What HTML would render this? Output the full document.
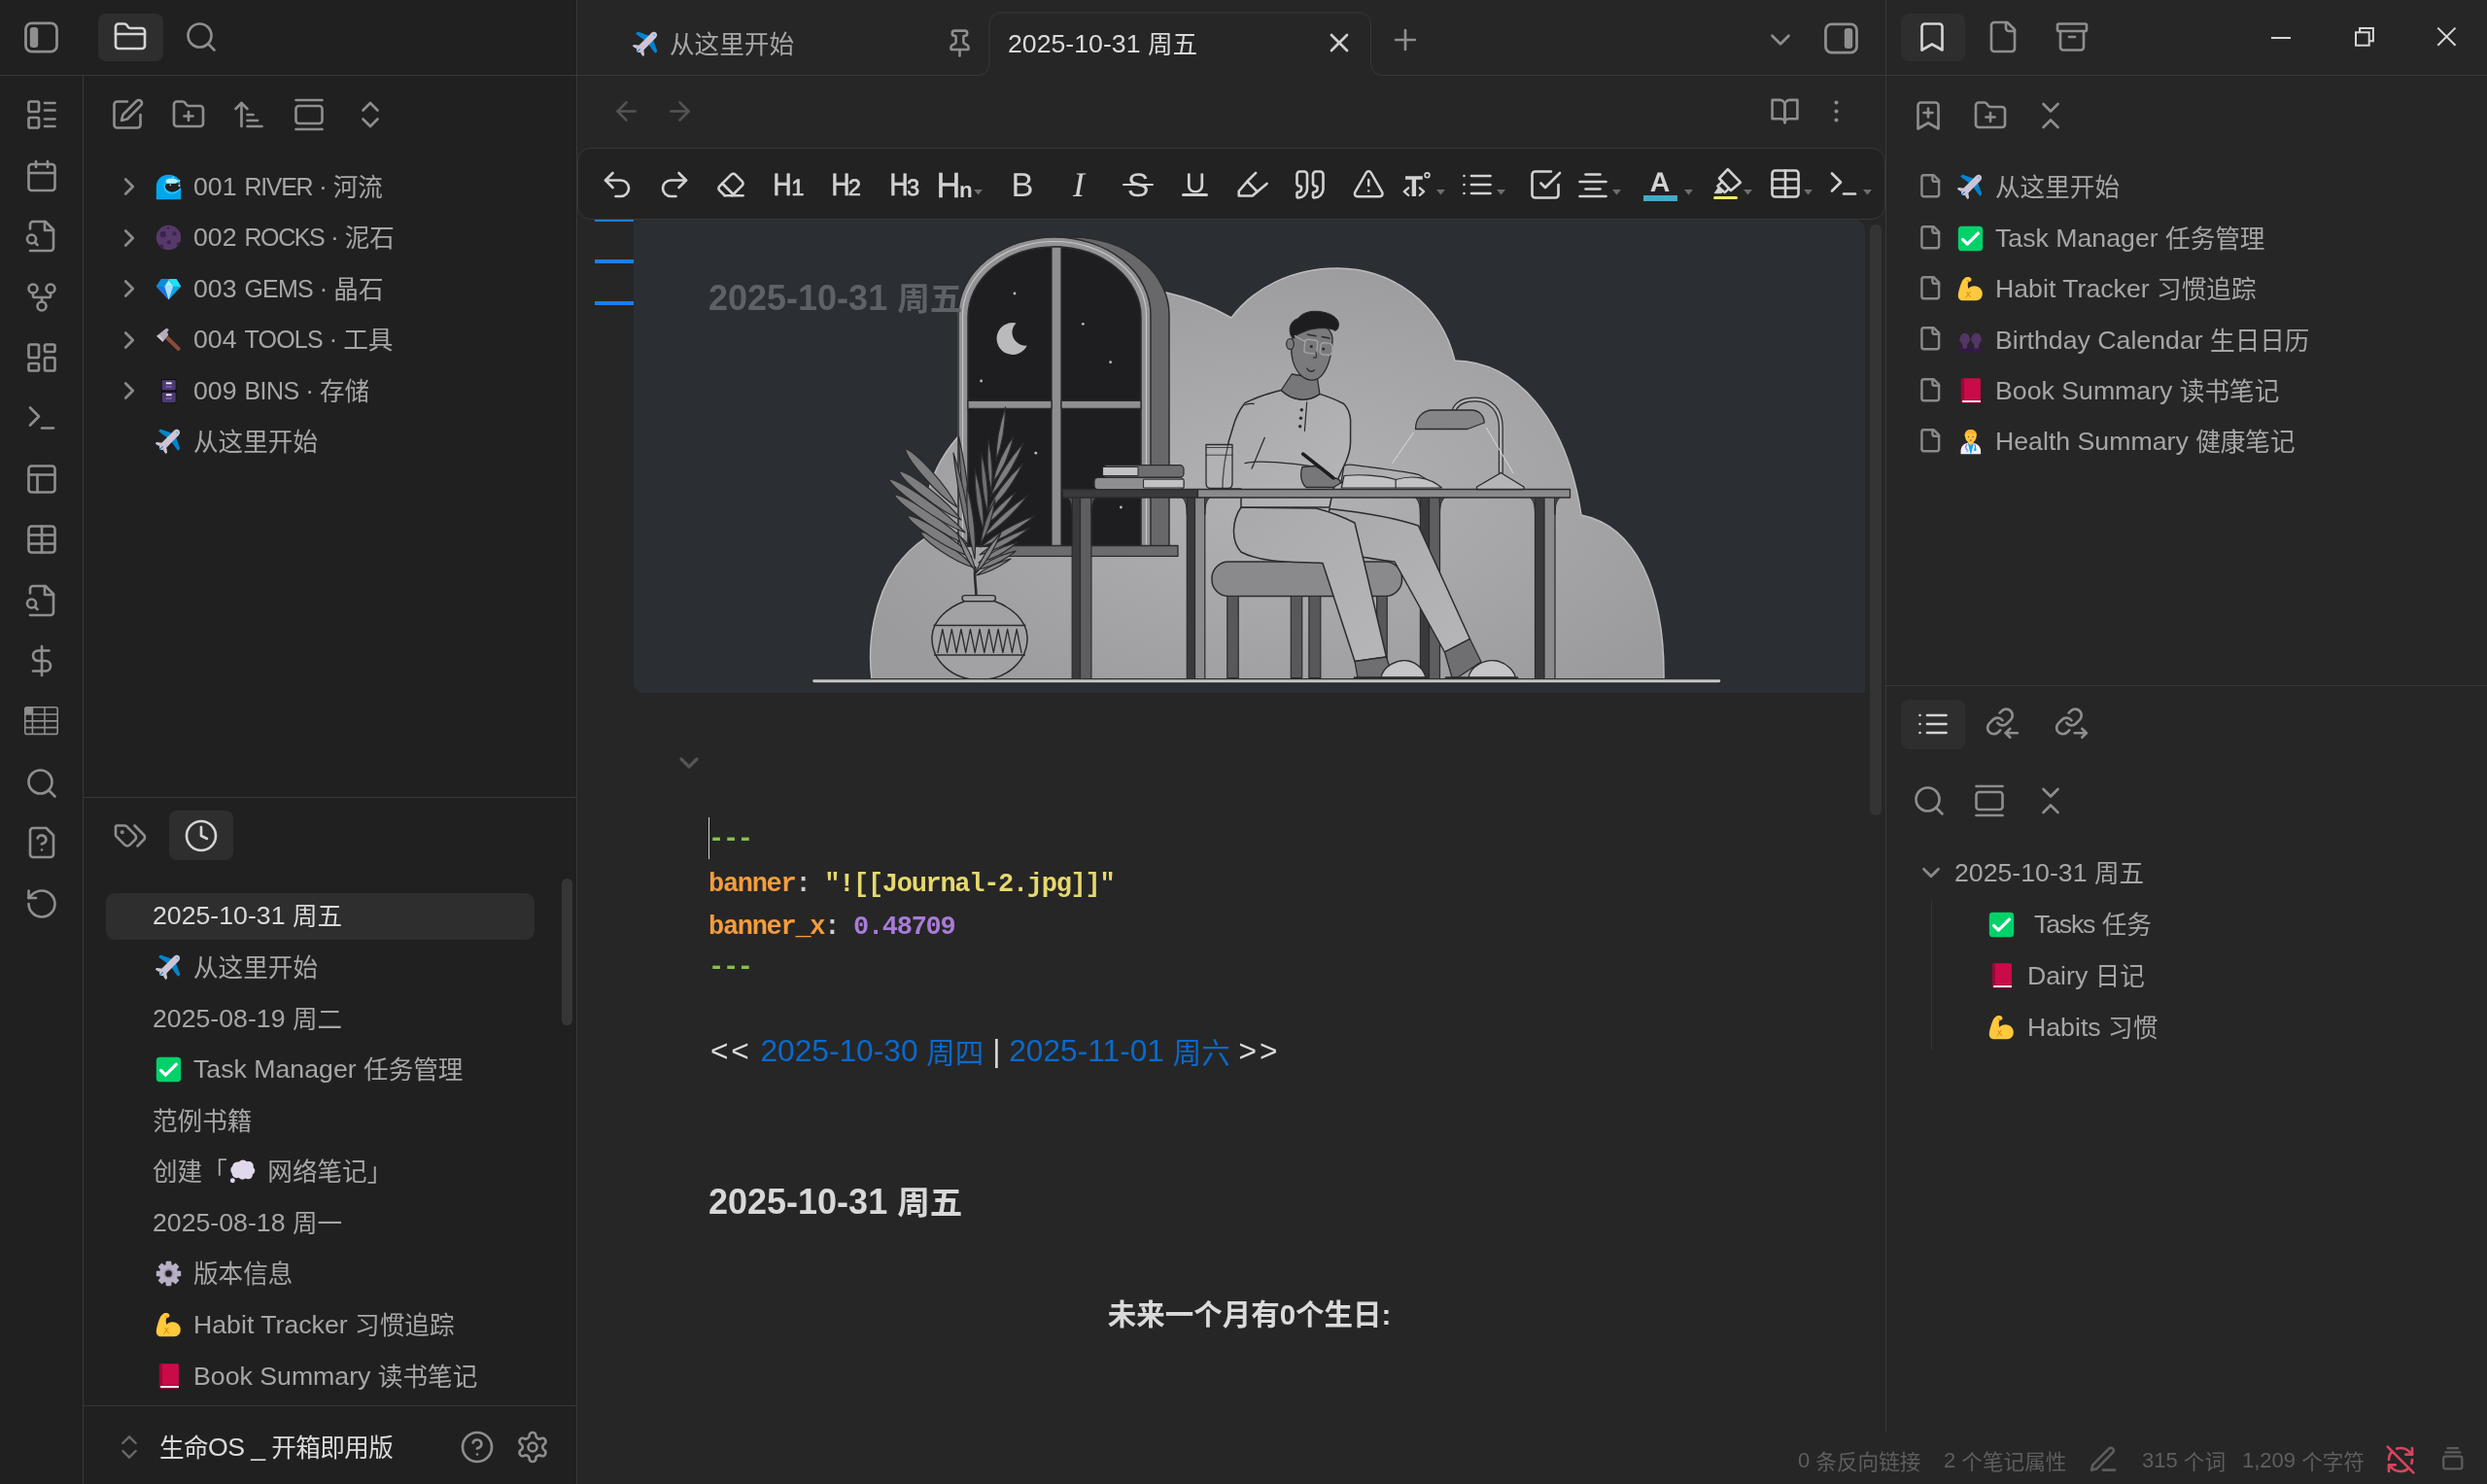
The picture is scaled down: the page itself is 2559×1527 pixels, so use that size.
<!DOCTYPE html><html lang="zh"><head><meta charset="utf-8"><title>2025-10-31 周五 - 生命OS _ 开箱即用版 - Obsidian</title><style>
*{box-sizing:border-box;margin:0;padding:0}
html,body{width:2559px;height:1527px;overflow:hidden;background:#262626}
body{position:relative;font-family:"Liberation Sans","Noto Sans CJK SC",sans-serif;color:#a6a6a6;font-size:26px}
.b,.ic,.t,.tt,.st,.ed,.mono,.h1{position:absolute;display:block}
.t,.tt,.st,.ed,.mono,.h1{white-space:pre;will-change:transform}
svg text{text-rendering:geometricPrecision}
.ic{will-change:transform}
.c{position:relative}
.t{font-size:26.7px;color:#a6a6a6}
.tt{font-size:26.7px;color:#dadada}
.t .c,.tt .c{font-size:25.6px;top:.7px}
.st .c{font-size:21.6px;top:1.5px}
.ed .c{font-size:29.5px;top:2px}
.h1 .c{font-size:33.5px;top:.4px}
.st{font-size:22px;color:#5e5e5e}
.ed{font-size:31.7px;color:#dadada}
.mono{font-family:"Liberation Mono","Noto Sans CJK SC",monospace;font-weight:bold;font-size:27px;letter-spacing:-1.3px}
.h1{font-size:36px;font-weight:bold;color:#d8d8d8}
a{color:#0b69cb;text-decoration:none}
</style></head><body>
<div class="b" style="left:0px;top:0px;width:594px;height:1527px;background:#202020"></div>
<div class="b" style="left:0px;top:77px;width:594px;height:1px;background:#383838"></div>
<div class="b" style="left:85px;top:78px;width:1px;height:1449px;background:#383838"></div>
<div class="b" style="left:593px;top:0px;width:1px;height:1527px;background:#383838"></div>
<div class="b" style="left:86px;top:820px;width:507px;height:1px;background:#383838"></div>
<div class="b" style="left:86px;top:1446px;width:507px;height:1px;background:#383838"></div>
<div class="b" style="left:1940px;top:0px;width:1px;height:1474px;background:#383838"></div>
<div class="b" style="left:1941px;top:77px;width:618px;height:1px;background:#383838"></div>
<div class="b" style="left:1941px;top:705px;width:618px;height:1px;background:#383838"></div>
<svg class="ic" style="left:22px;top:20px;width:41px;height:37px;color:#8e8e8e" viewBox="0 0 41 37" fill="none" stroke="currentColor" stroke-width="2.8"><rect x="4.5" y="3.9" width="32" height="29.200" rx="6"/><rect x="8.800" y="8" width="8.400" height="21" rx="3.200" fill="currentColor" stroke="none"/></svg>
<div class="b" style="left:101px;top:14px;width:67px;height:49px;background:#2e2e2e;border-radius:8px"></div>
<svg class="ic" style="left:116.3px;top:20.2px;width:36px;height:36px;color:#d4d4d4" viewBox="0 0 24 24" fill="none" stroke="currentColor" stroke-width="1.75" stroke-linecap="round" stroke-linejoin="round"><path d="M20 20a2 2 0 0 0 2-2V8a2 2 0 0 0-2-2h-7.900a2 2 0 0 1-1.690-.9L9.600 3.900A2 2 0 0 0 7.930 3H4a2 2 0 0 0-2 2v13a2 2 0 0 0 2 2Z"/><path d="M2 10h20"/></svg>
<svg class="ic" style="left:188.5px;top:20.4px;width:36px;height:36px;color:#8e8e8e" viewBox="0 0 24 24" fill="none" stroke="currentColor" stroke-width="1.75" stroke-linecap="round" stroke-linejoin="round"><circle cx="11" cy="11" r="8"/><path d="m21 21-4.3-4.3"/></svg>
<svg class="ic" style="left:24.5px;top:100.4px;width:36px;height:36px;color:#8e8e8e" viewBox="0 0 24 24" fill="none" stroke="currentColor" stroke-width="1.75" stroke-linecap="round" stroke-linejoin="round"><rect width="7" height="7" x="3" y="3" rx="1"/><rect width="7" height="7" x="3" y="14" rx="1"/><path d="M14 4h7"/><path d="M14 9h7"/><path d="M14 15h7"/><path d="M14 20h7"/></svg>
<svg class="ic" style="left:24.5px;top:162.8px;width:36px;height:36px;color:#8e8e8e" viewBox="0 0 24 24" fill="none" stroke="currentColor" stroke-width="1.75" stroke-linecap="round" stroke-linejoin="round"><path d="M8 2v4"/><path d="M16 2v4"/><rect width="18" height="18" x="3" y="4" rx="2"/><path d="M3 10h18"/></svg>
<svg class="ic" style="left:24.5px;top:225.2px;width:36px;height:36px;color:#8e8e8e" viewBox="0 0 24 24" fill="none" stroke="currentColor" stroke-width="1.75" stroke-linecap="round" stroke-linejoin="round"><path d="M4 22h14a2 2 0 0 0 2-2V7.5L14.5 2H6a2 2 0 0 0-2 2v3"/><polyline points="14 2 14 8 20 8"/><path d="M5 17a3 3 0 1 0 0-6 3 3 0 0 0 0 6z"/><path d="m9 18-1.5-1.5"/></svg>
<svg class="ic" style="left:24.5px;top:287.6px;width:36px;height:36px;color:#8e8e8e" viewBox="0 0 24 24" fill="none" stroke="currentColor" stroke-width="1.75" stroke-linecap="round" stroke-linejoin="round"><circle cx="12" cy="18" r="3"/><circle cx="6" cy="6" r="3"/><circle cx="18" cy="6" r="3"/><path d="M18 9v2c0 .6-.4 1-1 1H7c-.6 0-1-.4-1-1V9"/><path d="M12 12v3"/></svg>
<svg class="ic" style="left:24.5px;top:350.0px;width:36px;height:36px;color:#8e8e8e" viewBox="0 0 24 24" fill="none" stroke="currentColor" stroke-width="1.75" stroke-linecap="round" stroke-linejoin="round"><rect width="7" height="9" x="3" y="3" rx="1"/><rect width="7" height="5" x="14" y="3" rx="1"/><rect width="7" height="9" x="14" y="12" rx="1"/><rect width="7" height="5" x="3" y="16" rx="1"/></svg>
<svg class="ic" style="left:24.5px;top:412.4px;width:36px;height:36px;color:#8e8e8e" viewBox="0 0 24 24" fill="none" stroke="currentColor" stroke-width="1.75" stroke-linecap="round" stroke-linejoin="round"><polyline points="4 17 10 11 4 5"/><line x1="12" x2="20" y1="19" y2="19"/></svg>
<svg class="ic" style="left:24.5px;top:474.8px;width:36px;height:36px;color:#8e8e8e" viewBox="0 0 24 24" fill="none" stroke="currentColor" stroke-width="1.75" stroke-linecap="round" stroke-linejoin="round"><rect width="18" height="18" x="3" y="3" rx="2"/><path d="M3 9h18"/><path d="M9 21V9"/></svg>
<svg class="ic" style="left:24.5px;top:537.2px;width:36px;height:36px;color:#8e8e8e" viewBox="0 0 24 24" fill="none" stroke="currentColor" stroke-width="1.75" stroke-linecap="round" stroke-linejoin="round"><path d="M12 3v18"/><rect width="18" height="18" x="3" y="3" rx="2"/><path d="M3 9h18"/><path d="M3 15h18"/></svg>
<svg class="ic" style="left:24.5px;top:599.6px;width:36px;height:36px;color:#8e8e8e" viewBox="0 0 24 24" fill="none" stroke="currentColor" stroke-width="1.75" stroke-linecap="round" stroke-linejoin="round"><path d="M4 22h14a2 2 0 0 0 2-2V7.5L14.5 2H6a2 2 0 0 0-2 2v3"/><polyline points="14 2 14 8 20 8"/><path d="M5 17a3 3 0 1 0 0-6 3 3 0 0 0 0 6z"/><path d="m9 18-1.5-1.5"/></svg>
<svg class="ic" style="left:24.5px;top:662.0px;width:36px;height:36px;color:#8e8e8e" viewBox="0 0 24 24" fill="none" stroke="currentColor" stroke-width="1.75" stroke-linecap="round" stroke-linejoin="round"><line x1="12" x2="12" y1="2" y2="22"/><path d="M17 5H9.5a3.5 3.5 0 0 0 0 7h5a3.5 3.5 0 0 1 0 7H6"/></svg>
<svg class="ic" style="left:24px;top:726.4px;width:37px;height:32px;color:#8e8e8e" viewBox="0 0 37 32" fill="none" stroke="currentColor" stroke-width="1.600"><rect x="1.800" y="1.800" width="33.400" height="27.600" rx="2"/><path d="M1.800 9h33.400M1.800 15.900h33.400M1.800 22.600h33.400M9.400 1.800v27.600M22 1.800v27.600"/><rect x="1.800" y="1.800" width="7.600" height="7.200" fill="currentColor" stroke="none"/></svg>
<svg class="ic" style="left:24.5px;top:787.8px;width:36px;height:36px;color:#8e8e8e" viewBox="0 0 24 24" fill="none" stroke="currentColor" stroke-width="1.75" stroke-linecap="round" stroke-linejoin="round"><circle cx="11" cy="11" r="8"/><path d="m21 21-4.3-4.3"/></svg>
<svg class="ic" style="left:24.5px;top:849.2px;width:36px;height:36px;color:#8e8e8e" viewBox="0 0 24 24" fill="none" stroke="currentColor" stroke-width="1.75" stroke-linecap="round" stroke-linejoin="round"><path d="M12 17h.01"/><path d="M15 2H6a2 2 0 0 0-2 2v16a2 2 0 0 0 2 2h12a2 2 0 0 0 2-2V7z"/><path d="M9.1 9a3 3 0 0 1 5.82 1c0 2-3 3-3 3"/></svg>
<svg class="ic" style="left:24.5px;top:911.6px;width:36px;height:36px;color:#8e8e8e" viewBox="0 0 24 24" fill="none" stroke="currentColor" stroke-width="1.75" stroke-linecap="round" stroke-linejoin="round"><path d="M3 12a9 9 0 1 0 9-9 9.75 9.75 0 0 0-6.74 2.74L3 8"/><path d="M3 3v5h5"/></svg>
<svg class="ic" style="left:113.2px;top:100.0px;width:36px;height:36px;color:#8e8e8e" viewBox="0 0 24 24" fill="none" stroke="currentColor" stroke-width="1.75" stroke-linecap="round" stroke-linejoin="round"><path d="M12 3H5a2 2 0 0 0-2 2v14a2 2 0 0 0 2 2h14a2 2 0 0 0 2-2v-7"/><path d="M18.375 2.625a2.121 2.121 0 1 1 3 3L12 15l-4 1 1-4Z"/></svg>
<svg class="ic" style="left:175.5px;top:100.0px;width:36px;height:36px;color:#8e8e8e" viewBox="0 0 24 24" fill="none" stroke="currentColor" stroke-width="1.75" stroke-linecap="round" stroke-linejoin="round"><path d="M12 10v6"/><path d="M9 13h6"/><path d="M20 20a2 2 0 0 0 2-2V8a2 2 0 0 0-2-2h-7.9a2 2 0 0 1-1.69-.9L9.6 3.9A2 2 0 0 0 7.93 3H4a2 2 0 0 0-2 2v13a2 2 0 0 0 2 2Z"/></svg>
<svg class="ic" style="left:237.9px;top:100.0px;width:36px;height:36px;color:#8e8e8e" viewBox="0 0 24 24" fill="none" stroke="currentColor" stroke-width="1.75" stroke-linecap="round" stroke-linejoin="round"><path d="m3 8 4-4 4 4"/><path d="M7 4v16"/><path d="M11 12h4"/><path d="M11 16h7"/><path d="M11 20h10"/></svg>
<svg class="ic" style="left:300.2px;top:100.0px;width:36px;height:36px;color:#8e8e8e" viewBox="0 0 24 24" fill="none" stroke="currentColor" stroke-width="1.75" stroke-linecap="round" stroke-linejoin="round"><path d="M3 2h18"/><rect width="18" height="12" x="3" y="6" rx="2"/><path d="M3 22h18"/></svg>
<svg class="ic" style="left:362.6px;top:100.0px;width:36px;height:36px;color:#8e8e8e" viewBox="0 0 24 24" fill="none" stroke="currentColor" stroke-width="1.75" stroke-linecap="round" stroke-linejoin="round"><path d="m7 15 5 5 5-5"/><path d="m7 9 5-5 5 5"/></svg>
<svg class="ic" style="left:118.2px;top:177.4px;width:30px;height:30px;color:#8a8a8a" viewBox="0 0 24 24" fill="none" stroke="currentColor" stroke-width="2.2" stroke-linecap="round" stroke-linejoin="round"><path d="m9 18 6-6-6-6"/></svg>
<svg class="ic" style="left:159.2px;top:177.9px;width:29px;height:29px" viewBox="0 0 32 32"><path fill-rule="evenodd" d="M2 30V15.500C2 7.500 8 2 15.500 2c5.200 0 9.700 2 12.300 5.300L29 11v3l1 3.500V30zM13 12.300c-1 1.600-1.300 3.400-.5 5.200 1.400 3 4.700 4.700 8.200 4.200 3.400-.5 6.300-2.400 8.800-4.700l-.8-3.200-1.700-2.500z" fill="#00A6ED"/><path d="M13 12.300c-1 1.600-1.300 3.400-.5 5.200 1.400 3 4.700 4.700 8.200 4.200 3.400-.5 6.300-2.400 8.800-4.700l.3 1.400c-2.600 2.800-5.600 4.800-9.300 5.300-4.600.6-8.500-1.800-9.900-5.700-.8-2.300-.3-4.800 1.400-6.700z" fill="#29C5F6"/><path d="M12.800 9.800c-.3-1.700 1-3 2.600-2.800.8-1.100 2.400-1.200 3.300-.3.900-.9 2.400-.9 3.200.1.900-.6 2.300-.3 2.800.7 1.200 0 2 1 1.800 2.100-.1 1-1 1.700-1.900 1.600-.6.800-1.800.9-2.500.3-.8.700-2 .7-2.800.1-.8.700-2.100.7-2.900 0-1.500.8-3.300 0-3.600-1.800z" fill="#B4F0FC"/><g fill="#B4F0FC"><circle cx="28" cy="8.700" r="1.100"/><circle cx="28" cy="14.300" r="1.100"/><circle cx="18" cy="13.600" r=".9"/><circle cx="21.200" cy="4.900" r=".9"/></g></svg>
<div class="t" style="left:198.6px;top:171.9px;height:40px;line-height:40px;">001 <span style="font-size:25px;letter-spacing:-1.3px;margin-left:.5px">RIVER</span><span style="letter-spacing:-.8px"> · </span><span class="c">河流</span></div>
<svg class="ic" style="left:118.2px;top:229.8px;width:30px;height:30px;color:#8a8a8a" viewBox="0 0 24 24" fill="none" stroke="currentColor" stroke-width="2.2" stroke-linecap="round" stroke-linejoin="round"><path d="m9 18 6-6-6-6"/></svg>
<svg class="ic" style="left:159.2px;top:230.3px;width:29px;height:29px" viewBox="0 0 32 32"><defs><clipPath id="mc"><circle cx="16" cy="16" r="14"/></clipPath></defs><circle cx="16" cy="16" r="14" fill="#573969"/><g clip-path="url(#mc)" fill="#3B2350"><circle cx="15.500" cy="5.200" r="1.300"/><circle cx="9.700" cy="12.300" r="3.400"/><circle cx="22.500" cy="11.400" r="2.400"/><circle cx="16.400" cy="21.400" r="2.300"/><circle cx="7.500" cy="26.500" r="2.900"/><circle cx="27.500" cy="23.500" r="2.500"/></g></svg>
<div class="t" style="left:198.6px;top:224.3px;height:40px;line-height:40px;">002 <span style="font-size:25px;letter-spacing:-1.4px;margin-left:.5px">ROCKS</span><span style="letter-spacing:-.8px"> · </span><span class="c">泥石</span></div>
<svg class="ic" style="left:118.2px;top:282.2px;width:30px;height:30px;color:#8a8a8a" viewBox="0 0 24 24" fill="none" stroke="currentColor" stroke-width="2.2" stroke-linecap="round" stroke-linejoin="round"><path d="m9 18 6-6-6-6"/></svg>
<svg class="ic" style="left:159.2px;top:282.7px;width:29px;height:29px" viewBox="0 0 32 32"><path d="M7.700 4.500h17.100L30 12.900 16.100 28 2 12.900z" fill="#0FA6E0"/><path d="M7.700 4.500h8.400l-4.700 8.400H2z" fill="#0A8ED8"/><path d="M24.800 4.500h-8.700l5 8.400H30z" fill="#1FE0F7"/><path d="M16.100 5.800l5 7.100h-9.700z" fill="#A9F0FF"/><path d="M2 12.900h9.400L16.100 28z" fill="#1F6FE0"/><path d="M11.400 12.900h9.700L16.100 28z" fill="#A8DCFF"/></svg>
<div class="t" style="left:198.6px;top:276.7px;height:40px;line-height:40px;">003 <span style="font-size:25px;letter-spacing:-0.78px;margin-left:.5px">GEMS</span><span style="letter-spacing:-.8px"> · </span><span class="c">晶石</span></div>
<svg class="ic" style="left:118.2px;top:334.6px;width:30px;height:30px;color:#8a8a8a" viewBox="0 0 24 24" fill="none" stroke="currentColor" stroke-width="2.2" stroke-linecap="round" stroke-linejoin="round"><path d="m9 18 6-6-6-6"/></svg>
<svg class="ic" style="left:159.2px;top:335.1px;width:29px;height:29px" viewBox="0 0 32 32"><path d="M12.200 14.800l3.200-3.200 13.300 13.100c.9.900.9 2.300 0 3.200s-2.300.9-3.200 0z" fill="#8A4C38"/><path d="M2.300 11.900 13.400 3.100l3 1.200-2 3.200 1.400 3.300-6.400 7.800z" fill="#B4ACBC"/><path d="M2.300 11.900l3.700-1.100 4 5.400-.6 2.400z" fill="#CDC4D6"/></svg>
<div class="t" style="left:198.6px;top:329.1px;height:40px;line-height:40px;">004 <span style="font-size:25px;letter-spacing:-0.77px;margin-left:.5px">TOOLS</span><span style="letter-spacing:-.8px"> · </span><span class="c">工具</span></div>
<svg class="ic" style="left:118.2px;top:387.0px;width:30px;height:30px;color:#8a8a8a" viewBox="0 0 24 24" fill="none" stroke="currentColor" stroke-width="2.2" stroke-linecap="round" stroke-linejoin="round"><path d="m9 18 6-6-6-6"/></svg>
<svg class="ic" style="left:159.2px;top:387.5px;width:29px;height:29px" viewBox="0 0 32 32"><rect x="7.400" y="2.300" width="17.300" height="27.600" rx="2.600" fill="#0F0F0F"/><rect x="8.500" y="3.400" width="15.500" height="11.400" rx="1.500" fill="#4B3B72"/><rect x="8.500" y="17.300" width="15.500" height="11.600" rx="1.500" fill="#4B3B72"/><rect x="13.100" y="5.900" width="6.400" height="2.100" fill="#F3EEF8"/><rect x="13.100" y="19.100" width="6.400" height="2.100" fill="#F3EEF8"/><rect x="12.400" y="10.600" width="7.400" height="1" rx=".5" fill="#A070D0"/><rect x="12.400" y="23.800" width="7.400" height="1" rx=".5" fill="#A070D0"/></svg>
<div class="t" style="left:198.6px;top:381.5px;height:40px;line-height:40px;">009 <span style="font-size:25px;letter-spacing:-0.56px;margin-left:.5px">BINS</span><span style="letter-spacing:-.8px"> · </span><span class="c">存储</span></div>
<svg class="ic" style="left:159.2px;top:439.9px;width:29px;height:29px" viewBox="0 0 32 32"><g transform="translate(.6,-1.800) rotate(45 16 16) translate(16,16) scale(1.030) translate(-16,-16)"><path d="M12.8 8.500 1.500 13.800c-.6.300-.9.800-.9 1.400v1.200c0 .6.500 1 1.100.9l11.100-1.800zM19.200 8.500l11.300 5.300c.6.300.9.800.9 1.400v1.200c0 .6-.5 1-1.100.9l-11.100-1.800z" fill="#0084CE"/><path d="M12.800 23.500 8.300 26.800c-.3.200-.5.600-.5 1v.9c0 .5.400.8.900.7l4.100-1zM19.200 23.500l4.500 3.300c.3.200.5.600.5 1v.9c0 .5-.4.800-.9.700l-4.100-1z" fill="#CDC4D6"/><path d="M16 .6c2.300 0 3.700 2.400 3.700 4.800v19.800c0 1.700-1 3.400-2.100 4.400-.9.900-2.300.9-3.200 0-1.100-1-2.100-2.700-2.100-4.400V5.400C12.300 3 13.700.6 16 .6z" fill="#CDC4D6"/><path d="M14.300 4.600c.3-1 .9-1.600 1.700-1.600s1.400.6 1.700 1.600c-1.100-.3-2.300-.3-3.400 0z" fill="#26C9FC"/><rect x="15.400" y="25.500" width="1.200" height="5.200" rx=".6" fill="#0084CE"/></g></svg>
<div class="t" style="left:198.6px;top:433.9px;height:40px;line-height:40px;"><span class="c">从这里开始</span></div>
<svg class="ic" style="left:116.2px;top:841.5px;width:36px;height:36px;color:#8e8e8e" viewBox="0 0 24 24" fill="none" stroke="currentColor" stroke-width="1.75" stroke-linecap="round" stroke-linejoin="round"><path d="m15 5 6.3 6.3a2.4 2.4 0 0 1 0 3.4L17 19"/><path d="M9.586 5.586A2 2 0 0 0 8.172 5H3a1 1 0 0 0-1 1v5.172a2 2 0 0 0 .586 1.414L8.29 18.29a2.426 2.426 0 0 0 3.42 0l3.58-3.58a2.426 2.426 0 0 0 0-3.42z"/><circle cx="6.5" cy="9.5" r=".5" fill="currentColor"/></svg>
<div class="b" style="left:174px;top:834px;width:66px;height:51px;background:#2e2e2e;border-radius:8px"></div>
<svg class="ic" style="left:188.8px;top:841.5px;width:36px;height:36px;color:#d4d4d4" viewBox="0 0 24 24" fill="none" stroke="currentColor" stroke-width="1.75" stroke-linecap="round" stroke-linejoin="round"><circle cx="12" cy="12" r="10"/><polyline points="12 6 12 12 16 14"/></svg>
<div class="b" style="left:109px;top:919px;width:441px;height:48px;background:#2e2e2e;border-radius:9px"></div>
<div class="b" style="left:578px;top:904px;width:11px;height:151px;background:#363636;border-radius:6px"></div>
<div class="tt" style="left:157.0px;top:922.3px;height:40px;line-height:40px;">2025-10-31 <span class="c">周五</span></div>
<svg class="ic" style="left:159.2px;top:980.9px;width:29px;height:29px" viewBox="0 0 32 32"><g transform="translate(.6,-1.800) rotate(45 16 16) translate(16,16) scale(1.030) translate(-16,-16)"><path d="M12.8 8.500 1.500 13.800c-.6.300-.9.800-.9 1.400v1.200c0 .6.500 1 1.100.9l11.100-1.800zM19.200 8.500l11.300 5.300c.6.300.9.800.9 1.400v1.200c0 .6-.5 1-1.100.9l-11.100-1.800z" fill="#0084CE"/><path d="M12.800 23.500 8.300 26.800c-.3.200-.5.600-.5 1v.9c0 .5.400.8.900.7l4.100-1zM19.200 23.500l4.500 3.300c.3.200.5.600.5 1v.9c0 .5-.4.800-.9.700l-4.100-1z" fill="#CDC4D6"/><path d="M16 .6c2.300 0 3.700 2.400 3.700 4.800v19.800c0 1.700-1 3.400-2.100 4.400-.9.900-2.300.9-3.200 0-1.100-1-2.100-2.700-2.100-4.400V5.400C12.300 3 13.700.6 16 .6z" fill="#CDC4D6"/><path d="M14.300 4.600c.3-1 .9-1.600 1.700-1.600s1.400.6 1.700 1.600c-1.100-.3-2.300-.3-3.400 0z" fill="#26C9FC"/><rect x="15.400" y="25.500" width="1.200" height="5.200" rx=".6" fill="#0084CE"/></g></svg>
<div class="t" style="left:199.4px;top:974.9px;height:40px;line-height:40px;"><span class="c">从这里开始</span></div>
<div class="t" style="left:157.0px;top:1027.5px;height:40px;line-height:40px;">2025-08-19 <span class="c">周二</span></div>
<svg class="ic" style="left:159.2px;top:1086.0px;width:29px;height:29px" viewBox="0 0 32 32"><rect x="2" y="2" width="28" height="28" rx="4" fill="#00D26A"/><path d="M7.300 17l5.200 5.200L24.700 10" fill="none" stroke="#fff" stroke-width="3.600" stroke-linecap="round" stroke-linejoin="round"/></svg>
<div class="t" style="left:199.4px;top:1080.0px;height:40px;line-height:40px;">Task Manager <span class="c">任务管理</span></div>
<div class="t" style="left:157.0px;top:1132.6px;height:40px;line-height:40px;"><span class="c">范例书籍</span></div>
<div class="t" style="left:157.0px;top:1185.2px;height:40px;line-height:40px;"><span class="c">创建「</span><span style="display:inline-block;width:41.5px"></span><span class="c">网络笔记」</span></div>
<svg class="ic" style="left:234.9px;top:1191.2px;width:29px;height:29px" viewBox="0 0 32 32"><g fill="#E1D8EC"><circle cx="10.500" cy="11" r="6"/><circle cx="16.500" cy="8.800" r="6"/><circle cx="23" cy="10" r="5.500"/><circle cx="25.500" cy="15" r="4.600"/><circle cx="22.500" cy="19.500" r="5"/><circle cx="16" cy="20" r="5"/><circle cx="9.500" cy="18" r="5.500"/><circle cx="7" cy="14" r="4.400"/><circle cx="16" cy="14" r="7"/><circle cx="4.800" cy="26.200" r="2.700"/></g></svg>
<div class="t" style="left:157.0px;top:1237.8px;height:40px;line-height:40px;">2025-08-18 <span class="c">周一</span></div>
<svg class="ic" style="left:159.2px;top:1296.4px;width:29px;height:29px" viewBox="0 0 32 32"><path d="M13.73 2.79L18.27 2.79L18.61 6.56L20.83 7.47L23.74 5.06L26.94 8.26L24.53 11.17L25.44 13.39L29.21 13.73L29.21 18.27L25.44 18.61L24.53 20.83L26.94 23.74L23.74 26.94L20.83 24.53L18.61 25.44L18.27 29.21L13.73 29.21L13.39 25.44L11.17 24.53L8.26 26.94L5.06 23.74L7.47 20.83L6.56 18.61L2.79 18.27L2.79 13.73L6.56 13.39L7.47 11.17L5.06 8.26L8.26 5.06L11.17 7.47L13.39 6.56Z" fill="#B8B0C4" stroke="#B8B0C4" stroke-width="1.600" stroke-linejoin="round"/><circle cx="16" cy="16" r="5.600" fill="#9D8FB0"/><circle cx="16" cy="16" r="3.700" fill="#202020"/></svg>
<div class="t" style="left:199.4px;top:1290.4px;height:40px;line-height:40px;"><span class="c">版本信息</span></div>
<svg class="ic" style="left:159.2px;top:1348.9px;width:29px;height:29px" viewBox="0 0 32 32"><path d="M9.500 3.500c1.800-1.500 5.500-1.700 7 .2 1 1.300.7 3-.6 3.600l-2.600.9c-.5 2.300-.4 4.800.4 7.300 2.200-2.600 6.300-3.800 10-2.400 4.600 1.700 6.800 6.300 5.600 10.500-.9 3.200-3.800 5.200-7.500 5.400H7.500c-3.200 0-5.500-2.300-5.500-5.400 0-4.400 2.500-12.700 5-17.600.6-1.100 1.500-1.900 2.500-2.500z" fill="#FFC83D"/><path d="M12 19.500l4 5.500M15.500 19l-4.500 6.500M12.200 6.200l2.300.9" fill="none" stroke="#D67D00" stroke-width="1" stroke-linecap="round"/></svg>
<div class="t" style="left:199.4px;top:1342.9px;height:40px;line-height:40px;">Habit Tracker <span class="c">习惯追踪</span></div>
<svg class="ic" style="left:159.2px;top:1401.5px;width:29px;height:29px" viewBox="0 0 32 32"><path d="M5.400 3.500c0-1.100.9-2 2-2h18.600c.8 0 1.500.7 1.500 1.500v25.200c0 .8-.7 1.500-1.500 1.500H7.400c-1.100 0-2-.9-2-2z" fill="#CA0B4A"/><path d="M5.400 3.500c0-1.100.9-2 2-2h1.400v24.700H7.400c-.8 0-1.500.3-2 .8z" fill="#990838"/><path d="M6.700 26.400h20.800v2.300H6.700z" fill="#F3EEF8"/><path d="M5.400 27.300c0-1.100.9-1.900 2-1.900h20.100v1H7.600c-.6 0-1 .5-1 1.100s.4 1.200 1 1.200h19.900v1H7.400c-1.100 0-2-.9-2-2z" fill="#990838"/></svg>
<div class="t" style="left:199.4px;top:1395.5px;height:40px;line-height:40px;">Book Summary <span class="c">读书笔记</span></div>
<svg class="ic" style="left:116.5px;top:1473.0px;width:32px;height:32px;color:#6a6a6a" viewBox="0 0 24 24" fill="none" stroke="currentColor" stroke-width="1.75" stroke-linecap="round" stroke-linejoin="round"><path d="m7 15 5 5 5-5"/><path d="m7 9 5-5 5 5"/></svg>
<div class="tt" style="left:164.0px;top:1468.5px;height:40px;line-height:40px;letter-spacing:-.6px"><span class="c">生命</span>OS _ <span class="c">开箱即用版</span></div>
<svg class="ic" style="left:472.5px;top:1471.0px;width:36px;height:36px;color:#8e8e8e" viewBox="0 0 24 24" fill="none" stroke="currentColor" stroke-width="1.75" stroke-linecap="round" stroke-linejoin="round"><circle cx="12" cy="12" r="10"/><path d="M9.09 9a3 3 0 0 1 5.83 1c0 2-3 3-3 3"/><path d="M12 17h.01"/></svg>
<svg class="ic" style="left:530.4px;top:1471.0px;width:36px;height:36px;color:#8e8e8e" viewBox="0 0 24 24" fill="none" stroke="currentColor" stroke-width="1.75" stroke-linecap="round" stroke-linejoin="round"><path d="M12.22 2h-.44a2 2 0 0 0-2 2v.18a2 2 0 0 1-1 1.73l-.43.25a2 2 0 0 1-2 0l-.15-.08a2 2 0 0 0-2.73.73l-.22.38a2 2 0 0 0 .73 2.73l.15.1a2 2 0 0 1 1 1.72v.51a2 2 0 0 1-1 1.74l-.15.09a2 2 0 0 0-.73 2.73l.22.38a2 2 0 0 0 2.73.73l.15-.08a2 2 0 0 1 2 0l.43.25a2 2 0 0 1 1 1.73V20a2 2 0 0 0 2 2h.44a2 2 0 0 0 2-2v-.18a2 2 0 0 1 1-1.73l.43-.25a2 2 0 0 1 2 0l.15.08a2 2 0 0 0 2.73-.73l.22-.39a2 2 0 0 0-.73-2.73l-.15-.08a2 2 0 0 1-1-1.74v-.5a2 2 0 0 1 1-1.74l.15-.09a2 2 0 0 0 .73-2.73l-.22-.38a2 2 0 0 0-2.73-.73l-.15.08a2 2 0 0 1-2 0l-.43-.25a2 2 0 0 1-1-1.73V4a2 2 0 0 0-2-2z"/><circle cx="12" cy="12" r="3"/></svg>
<div class="b" style="left:594px;top:77px;width:1346px;height:1px;background:#383838"></div>
<svg class="ic" style="left:1000px;top:0;width:430px;height:80px" viewBox="0 0 430 80" fill="none"><path d="M0 77.500H6a12 12 0 0 0 12-12V25a12 12 0 0 1 12-12H398.500a12 12 0 0 1 12 12V65.500a12 12 0 0 0 12 12H430V80H0z" fill="#262626"/><path d="M0 77.500H6a12 12 0 0 0 12-12V25a12 12 0 0 1 12-12H398.500a12 12 0 0 1 12 12V65.500a12 12 0 0 0 12 12H430" stroke="#383838" stroke-width="1"/></svg>
<svg class="ic" style="left:649.5px;top:30.5px;width:29px;height:29px" viewBox="0 0 32 32"><g transform="translate(.6,-1.800) rotate(45 16 16) translate(16,16) scale(1.030) translate(-16,-16)"><path d="M12.8 8.500 1.500 13.800c-.6.300-.9.800-.9 1.400v1.200c0 .6.500 1 1.100.9l11.100-1.800zM19.200 8.500l11.300 5.300c.6.300.9.800.9 1.400v1.200c0 .6-.5 1-1.100.9l-11.100-1.800z" fill="#0084CE"/><path d="M12.800 23.500 8.300 26.800c-.3.200-.5.600-.5 1v.9c0 .5.400.8.900.7l4.100-1zM19.200 23.500l4.500 3.300c.3.200.5.600.5 1v.9c0 .5-.4.800-.9.700l-4.100-1z" fill="#CDC4D6"/><path d="M16 .6c2.300 0 3.700 2.400 3.700 4.800v19.800c0 1.700-1 3.400-2.100 4.400-.9.900-2.300.9-3.200 0-1.100-1-2.100-2.700-2.100-4.400V5.400C12.300 3 13.700.6 16 .6z" fill="#CDC4D6"/><path d="M14.300 4.600c.3-1 .9-1.600 1.700-1.600s1.400.6 1.700 1.600c-1.100-.3-2.300-.3-3.400 0z" fill="#26C9FC"/><rect x="15.400" y="25.500" width="1.200" height="5.200" rx=".6" fill="#0084CE"/></g></svg>
<div class="t" style="left:689.0px;top:24.5px;height:40px;line-height:40px;"><span class="c">从这里开始</span></div>
<svg class="ic" style="left:972.1px;top:29.3px;width:31px;height:31px;color:#8e8e8e" viewBox="0 0 24 24" fill="none" stroke="currentColor" stroke-width="2" stroke-linecap="round" stroke-linejoin="round"><path d="M12 17v5"/><path d="M9 10.76a2 2 0 0 1-1.11 1.79l-1.78.9A2 2 0 0 0 5 15.24V16a1 1 0 0 0 1 1h12a1 1 0 0 0 1-1v-.76a2 2 0 0 0-1.11-1.79l-1.78-.9A2 2 0 0 1 15 10.76V7a1 1 0 0 1 1-1 2 2 0 0 0 0-4H8a2 2 0 0 0 0 4 1 1 0 0 1 1 1z"/></svg>
<div class="tt" style="left:1037.0px;top:24.5px;height:40px;line-height:40px;">2025-10-31 <span class="c">周五</span></div>
<svg class="ic" style="left:1361.5px;top:28.3px;width:32px;height:32px;color:#d0d0d0" viewBox="0 0 24 24" fill="none" stroke="currentColor" stroke-width="2" stroke-linecap="round" stroke-linejoin="round"><path d="M18 6 6 18"/><path d="m6 6 12 12"/></svg>
<svg class="ic" style="left:1428.6px;top:24.2px;width:34px;height:34px;color:#8e8e8e" viewBox="0 0 24 24" fill="none" stroke="currentColor" stroke-width="1.9" stroke-linecap="round" stroke-linejoin="round"><path d="M5 12h14"/><path d="M12 5v14"/></svg>
<svg class="ic" style="left:1815.3px;top:23.8px;width:34px;height:34px;color:#8e8e8e" viewBox="0 0 24 24" fill="none" stroke="currentColor" stroke-width="1.9" stroke-linecap="round" stroke-linejoin="round"><path d="m6 9 6 6 6-6"/></svg>
<svg class="ic" style="left:1874px;top:21px;width:41px;height:37px;color:#8e8e8e" viewBox="0 0 41 37" fill="none" stroke="currentColor" stroke-width="2.8"><rect x="4.5" y="3.900" width="32" height="29.200" rx="6"/><rect x="23.800" y="8" width="8.400" height="21" rx="3.200" fill="currentColor" stroke="none"/></svg>
<svg class="ic" style="left:628.8px;top:99.0px;width:31px;height:31px;color:#545454" viewBox="0 0 24 24" fill="none" stroke="currentColor" stroke-width="2" stroke-linecap="round" stroke-linejoin="round"><path d="m12 19-7-7 7-7"/><path d="M19 12H5"/></svg>
<svg class="ic" style="left:684.3px;top:99.0px;width:31px;height:31px;color:#545454" viewBox="0 0 24 24" fill="none" stroke="currentColor" stroke-width="2" stroke-linecap="round" stroke-linejoin="round"><path d="M5 12h14"/><path d="m12 5 7 7-7 7"/></svg>
<svg class="ic" style="left:1821.3px;top:98.5px;width:31px;height:31px;color:#8e8e8e" viewBox="0 0 24 24" fill="none" stroke="currentColor" stroke-width="2" stroke-linecap="round" stroke-linejoin="round"><path d="M2 3h6a4 4 0 0 1 4 4v14a3 3 0 0 0-3-3H2z"/><path d="M22 3h-6a4 4 0 0 0-4 4v14a3 3 0 0 1 3-3h7z"/></svg>
<svg class="ic" style="left:1874.0px;top:99.0px;width:31px;height:31px;color:#8e8e8e" viewBox="0 0 24 24" fill="none" stroke="currentColor" stroke-width="1.2" stroke-linecap="round" stroke-linejoin="round"><g fill="currentColor"><circle cx="12" cy="12" r="1"/><circle cx="12" cy="5" r="1"/><circle cx="12" cy="19" r="1"/></g></svg>
<div class="b" style="left:652px;top:226px;width:1267px;height:487px;background:#2b2e32;border-radius:0 10px 0 10px;overflow:hidden"></div>
<svg class="ic" style="left:652px;top:226px;width:1267px;height:487px" viewBox="652 226 1267 487" stroke-linejoin="round" stroke-linecap="round"><defs><radialGradient id="cg" cx="0.52" cy="0.55" r="0.6"><stop offset="0" stop-color="#b2b2b4"/><stop offset="1" stop-color="#9b9b9d"/></radialGradient><linearGradient id="pg" x1="0" y1="0" x2="1" y2="1"><stop offset="0" stop-color="#a9a9ab"/><stop offset="1" stop-color="#b6b6b8"/></linearGradient></defs><path d="M897 699C892 660 900 615 922 583C934 566 947 557 953 553C948 520 955 485 986 449L986 320L1200 301C1222 306 1248 316 1267 327C1290 296 1330 276 1376 276C1430 276 1482 310 1497 371C1560 372 1612 430 1627 530C1682 541 1713 604 1712 699Z" fill="url(#cg)" stroke="#bcbcbe" stroke-width="1.5"/><path d="M1005 562V324A99 80 0 0 1 1203 324V562Z" fill="#68686a" stroke="#2b2b2d" stroke-width="1.5"/><path d="M986 562V324A99 80 0 0 1 1184 324V562Z" fill="#929294" stroke="#2b2b2d" stroke-width="1.5"/><path d="M990.500 562V324.500A94.500 76 0 0 1 1179.500 324.500V562" fill="none" stroke="#c4c4c6" stroke-width="1.2"/><path d="M996 562V326A89 72 0 0 1 1174 326V562Z" fill="#1e1e20" stroke="#2b2b2d" stroke-width="1.5"/><circle cx="1044" cy="302" r="1.400" fill="#bdbdbf"/><circle cx="1114.3" cy="333.3" r="1.400" fill="#bdbdbf"/><circle cx="1142.6" cy="372.7" r="1.400" fill="#bdbdbf"/><circle cx="1009.6" cy="392" r="1.400" fill="#bdbdbf"/><circle cx="1065.8" cy="466.2" r="1.400" fill="#bdbdbf"/><circle cx="1153.4" cy="522" r="1.400" fill="#bdbdbf"/><path d="M1045.500 332.500A16.400 16.400 0 1 0 1056.800 355.500A13.500 13.500 0 0 1 1045.500 332.500Z" fill="#bababc"/><rect x="1082" y="254" width="10" height="308" fill="#8f8f91" stroke="#2b2b2d" stroke-width="1.3"/><rect x="996" y="412.400" width="86" height="8" fill="#8f8f91" stroke="#2b2b2d" stroke-width="1.3"/><rect x="1092" y="412.400" width="82" height="8" fill="#8f8f91" stroke="#2b2b2d" stroke-width="1.3"/><rect x="1030" y="561.500" width="182" height="10.800" fill="#6c6c6e" stroke="#2b2b2d" stroke-width="1.3"/><rect x="1247" y="578" width="195.500" height="35.500" rx="17" fill="#8a8a8c" stroke="#2b2b2d" stroke-width="1.5"/><rect x="1262.8" y="613.500" width="11.4" height="84" fill="#58585a" stroke="#2b2b2d" stroke-width="1.2"/><rect x="1328.3" y="613.500" width="11.4" height="84" fill="#58585a" stroke="#2b2b2d" stroke-width="1.2"/><rect x="1346.9" y="613.500" width="11.9" height="84" fill="#58585a" stroke="#2b2b2d" stroke-width="1.2"/><rect x="1416.7" y="613.500" width="10.5" height="84" fill="#58585a" stroke="#2b2b2d" stroke-width="1.2"/><rect x="1103.2" y="511" width="8.299999999999955" height="188" fill="#3a3a3c" stroke="#2b2b2d" stroke-width="1.2"/><rect x="1111.5" y="511" width="11.400000000000091" height="188" fill="#5e5e60" stroke="#2b2b2d" stroke-width="1.2"/><rect x="1221.3" y="511" width="8.200000000000045" height="188" fill="#3a3a3c" stroke="#2b2b2d" stroke-width="1.2"/><rect x="1229.5" y="511" width="10.299999999999955" height="188" fill="#8a8a8c" stroke="#2b2b2d" stroke-width="1.2"/><rect x="1461.4" y="511" width="9.099999999999909" height="188" fill="#3a3a3c" stroke="#2b2b2d" stroke-width="1.2"/><rect x="1470.5" y="511" width="11.0" height="188" fill="#5e5e60" stroke="#2b2b2d" stroke-width="1.2"/><rect x="1579.5" y="511" width="9.5" height="188" fill="#3a3a3c" stroke="#2b2b2d" stroke-width="1.2"/><rect x="1589" y="511" width="11" height="188" fill="#8a8a8c" stroke="#2b2b2d" stroke-width="1.2"/><path d="M1122.9 511h7c-5 2 -7 8 -7 18z" fill="#4a4a4c" stroke="#2b2b2d" stroke-width="1"/><path d="M1103.2 511h-7c5 2 7 8 7 18z" fill="#4a4a4c" stroke="#2b2b2d" stroke-width="1"/><path d="M1239.8 511h7c-5 2 -7 8 -7 18z" fill="#4a4a4c" stroke="#2b2b2d" stroke-width="1"/><path d="M1481.5 511h7c-5 2 -7 8 -7 18z" fill="#4a4a4c" stroke="#2b2b2d" stroke-width="1"/><path d="M1461.4 511h-7c5 2 7 8 7 18z" fill="#4a4a4c" stroke="#2b2b2d" stroke-width="1"/><path d="M1600 511h7c-5 2 -7 8 -7 18z" fill="#4a4a4c" stroke="#2b2b2d" stroke-width="1"/><path d="M1579.5 511h-7c5 2 7 8 7 18z" fill="#4a4a4c" stroke="#2b2b2d" stroke-width="1"/><path d="M1221.3 511h-7c5 2 7 8 7 18z" fill="#4a4a4c" stroke="#2b2b2d" stroke-width="1"/><path d="M1368 523.500C1400 527 1436 533 1459.500 541L1512.500 657.500L1486.500 671L1435 578C1405 574 1380 570 1362 566Z" fill="url(#pg)" stroke="#2b2b2d" stroke-width="1.5"/><path d="M1486.500 671L1512.500 657.500L1524 681L1500 697H1494Z" fill="#6f6f71" stroke="#2b2b2d" stroke-width="1.3"/><path d="M1511 697.500C1513 685 1528 678 1540 680C1550 682 1558 690 1559.500 697.500Z" fill="#c5c5c7" stroke="#2b2b2d" stroke-width="1.3"/><path d="M1488 697.500H1561" stroke="#2b2b2d" stroke-width="2.5"/><path d="M1277 522C1268 535 1266 556 1277 568C1300 580 1335 578 1361 579.500L1394 680.500L1426.500 676L1394 538C1380 531 1366 526 1354 523Z" fill="url(#pg)" stroke="#2b2b2d" stroke-width="1.5"/><path d="M1394 680.500L1426.500 676L1431 690L1421 697.500H1397Z" fill="#6f6f71" stroke="#2b2b2d" stroke-width="1.3"/><path d="M1421 697.500C1423 685 1438 678 1449 680C1459 682 1465.500 690 1467 697.500Z" fill="#c5c5c7" stroke="#2b2b2d" stroke-width="1.3"/><path d="M1394 697.500H1469" stroke="#2b2b2d" stroke-width="2.5"/><path d="M1318.300 401.500C1304 405 1292 409 1281 414.700C1275 422 1271 431 1268.700 439.500C1265 450 1262.500 461 1261 470.500C1259 482 1258 492 1257.900 503H1277V522H1368L1372 503L1382.700 479.800C1387 471 1389.600 463 1389.600 455V431.700C1389 425 1386.500 419.500 1382.700 415.500C1375 411.500 1366 408 1357.900 405.400C1346 414 1330 413 1318.300 401.500Z" fill="url(#pg)" stroke="#2b2b2d" stroke-width="1.500"/><path d="M1382.700 479.800C1384 478.500 1387 478 1389.600 478.200C1412 481 1440 484 1459.400 488.300L1470 494.500L1380 496.500Z" fill="url(#pg)" stroke="#2b2b2d" stroke-width="1.300"/><path d="M1329.200 385L1318.300 401.500C1330 413 1346 414 1357.900 405.400L1355.500 389Z" fill="#77777a" stroke="#2b2b2d" stroke-width="1.300"/><path d="M1329 352C1327.500 366 1331 380 1340 387.500C1345 391.500 1352 392.500 1357 389C1365 383 1369.500 370 1371 352C1372 340 1364 333 1350 333C1337 333 1330 341 1329 352Z" fill="#7a7a7c" stroke="#2b2b2d" stroke-width="1.300"/><ellipse cx="1327.500" cy="354" rx="3.800" ry="5.500" fill="#7a7a7c" stroke="#2b2b2d" stroke-width="1.200"/><path d="M1328.500 346C1325 338 1328 330 1336 327.500C1340 321 1352 318.500 1363 321.500C1374 324 1380 331 1376.500 338C1375 341 1372.500 340.500 1371.500 339C1364 337 1352 337 1344 340.500C1339 343 1334 343.500 1331.500 348Z" fill="#1d1d1f" stroke="#2b2b2d" stroke-width="1"/><rect x="1342.400" y="349.600" width="13.100" height="13.900" rx="3" fill="none" stroke="#a2a2a4" stroke-width="1.400" transform="rotate(6 1349 356)"/><rect x="1358.600" y="353" width="11.700" height="12" rx="3" fill="none" stroke="#a2a2a4" stroke-width="1.400" transform="rotate(6 1364 359)"/><path d="M1342.400 351.100L1332.300 345.700" stroke="#a2a2a4" stroke-width="1.400"/><circle cx="1349.300" cy="356.600" r="1.500" fill="#2b2b2d"/><circle cx="1361.700" cy="358.900" r="1.500" fill="#2b2b2d"/><path d="M1344.700 379C1346.500 383 1351 383 1352.400 380.600" fill="none" stroke="#2b2b2d" stroke-width="1.300"/><path d="M1354 362L1354.500 367C1354 368.500 1352.500 368.500 1351.500 367.800" fill="none" stroke="#2b2b2d" stroke-width="1.100"/><path d="M1345.500 344.200L1354 345.700M1360.200 346.500L1367.900 348" stroke="#2b2b2d" stroke-width="1.500"/><circle cx="1339.300" cy="421.700" r="1.700" fill="#2b2b2d"/><circle cx="1338.500" cy="430.200" r="1.700" fill="#2b2b2d"/><circle cx="1337.700" cy="438.700" r="1.700" fill="#2b2b2d"/><path d="M1344.700 413.900L1342.400 443.400" stroke="#2b2b2d" stroke-width="1.200" fill="none"/><path d="M1281.500 416.500C1284 415.500 1287 415.200 1290 415.500M1301.300 450.300L1288.100 482.100M1281.100 476.700C1292 473 1330 476.500 1350.900 479.800" stroke="#2b2b2d" stroke-width="1.300" fill="none"/><path d="M1340 480.500C1337.500 488 1338.500 497 1344 501.500H1372L1379.600 497C1379 493.500 1376 492 1372 492C1368 486 1360 481 1352 479.500Z" fill="#77777a" stroke="#2b2b2d" stroke-width="1.300"/><path d="M1340.800 467.200L1372 491.800" stroke="#1d1d1f" stroke-width="3.600"/><path d="M1380.300 502L1383 489.500C1398 488 1420 488.500 1436.100 493.500C1452 489 1470 490 1483.500 502Z" fill="#c2c2c4" stroke="#2b2b2d" stroke-width="1.200"/><path d="M1436.100 493.500V502" stroke="#2b2b2d" stroke-width="1.200"/><rect x="1093.500" y="503.500" width="139" height="8.500" fill="#3a3a3c" stroke="#2b2b2d" stroke-width="1.300"/><rect x="1232.500" y="503.500" width="383" height="8.500" fill="#8a8a8c" stroke="#2b2b2d" stroke-width="1.300"/><rect x="1135" y="478.700" width="83" height="12.500" rx="4" fill="#6e6e70" stroke="#2b2b2d" stroke-width="1.200"/><rect x="1135" y="480.500" width="36" height="9" fill="#c2c2c4" stroke="#2b2b2d" stroke-width="1"/><rect x="1126" y="491.500" width="92" height="12" rx="4" fill="#8e8e90" stroke="#2b2b2d" stroke-width="1.200"/><rect x="1177" y="493.200" width="41" height="8.800" fill="#c2c2c4" stroke="#2b2b2d" stroke-width="1"/><path d="M1241 457.500H1268V497C1268 500.500 1266 502.500 1263.500 502.500H1245.500C1243 502.500 1241 500.500 1241 497Z" fill="#c0c0c2" fill-opacity=".28" stroke="#2b2b2d" stroke-width="1.300"/><path d="M1241 468.200H1268M1241 460.500H1268" stroke="#2b2b2d" stroke-width="1" stroke-opacity=".8"/><path d="M1496.600 421C1500 414 1508 411 1518 411C1534 411 1544.300 422 1544.300 440V487" fill="none" stroke="#2b2b2d" stroke-width="5"/><path d="M1496.600 421C1500 414 1508 411 1518 411C1534 411 1544.300 422 1544.300 440V487" fill="none" stroke="#b2b2b4" stroke-width="2.600"/><path d="M1456.500 441.500C1456.500 430 1464 422 1474 422H1514C1522 422 1527.200 428 1527.200 435L1510 441.500Z" fill="#858587" stroke="#2b2b2d" stroke-width="1.300"/><path d="M1519.500 501L1544.300 486.500L1568 501V503.500H1519.500Z" fill="#b5b5b7" stroke="#2b2b2d" stroke-width="1.300"/><path d="M1454.300 445.400L1432.400 476.700M1529.300 440L1557 486.700" stroke="#cfcfd1" stroke-width="1.100"/><path d="M1004.500 613C1004 600 1002 592 1003.500 584" fill="none" stroke="#2b2b2d" stroke-width="2.600"/><path d="M1006.0 586.0Q1025.9 582.5 1045.0 567.2Q1021.2 572.6 1006.0 586.0Z" fill="#7d7d7f" stroke="#2b2b2d" stroke-width="1.200"/><path d="M1007.0 579.0Q1027.7 574.3 1047.2 557.8Q1022.5 564.6 1007.0 579.0Z" fill="#7d7d7f" stroke="#2b2b2d" stroke-width="1.200"/><path d="M1008.0 571.0Q1034.1 563.7 1059.7 543.1Q1028.4 553.2 1008.0 571.0Z" fill="#7d7d7f" stroke="#2b2b2d" stroke-width="1.200"/><path d="M1009.0 563.0Q1037.2 553.6 1064.9 530.6Q1031.1 543.2 1009.0 563.0Z" fill="#7d7d7f" stroke="#2b2b2d" stroke-width="1.200"/><path d="M1011.0 553.0Q1036.1 537.9 1057.6 509.7Q1027.9 529.1 1011.0 553.0Z" fill="#7d7d7f" stroke="#2b2b2d" stroke-width="1.200"/><path d="M1013.0 541.0Q1031.4 529.3 1045.0 506.6Q1023.4 521.8 1013.0 541.0Z" fill="#7d7d7f" stroke="#2b2b2d" stroke-width="1.200"/><path d="M1016.0 526.0Q1037.6 508.0 1052.4 477.3Q1027.2 500.2 1016.0 526.0Z" fill="#7d7d7f" stroke="#2b2b2d" stroke-width="1.200"/><path d="M1019.0 511.0Q1040.0 489.4 1053.4 455.4Q1029.0 482.6 1019.0 511.0Z" fill="#7d7d7f" stroke="#2b2b2d" stroke-width="1.200"/><path d="M1022.0 496.0Q1036.9 477.3 1043.0 449.0Q1026.0 472.4 1022.0 496.0Z" fill="#7d7d7f" stroke="#2b2b2d" stroke-width="1.200"/><path d="M1025.0 474.0Q1034.2 450.0 1034.6 418.8Q1024.4 448.3 1025.0 474.0Z" fill="#7d7d7f" stroke="#2b2b2d" stroke-width="1.200"/><path d="M1012.0 546.0Q1013.4 516.4 1003.0 482.0Q1002.5 518.0 1012.0 546.0Z" fill="#6f6f71" stroke="#2b2b2d" stroke-width="1.200"/><path d="M1016.0 527.0Q1018.3 499.1 1010.0 466.0Q1008.3 500.0 1016.0 527.0Z" fill="#6f6f71" stroke="#2b2b2d" stroke-width="1.200"/><path d="M1020.0 506.0Q1023.1 481.5 1017.0 452.0Q1014.2 481.9 1020.0 506.0Z" fill="#6f6f71" stroke="#2b2b2d" stroke-width="1.200"/><path d="M1009.0 560.0Q1020.5 540.9 1024.0 514.0Q1011.0 537.7 1009.0 560.0Z" fill="#6f6f71" stroke="#2b2b2d" stroke-width="1.200"/><path d="M1000.0 562.0Q999.9 510.5 986.6 449.1Q988.0 511.9 1000.0 562.0Z" fill="#747476" stroke="#2b2b2d" stroke-width="1.200"/><path d="M1002.0 568.0Q997.9 521.0 981.0 466.0Q987.2 523.2 1002.0 568.0Z" fill="#747476" stroke="#2b2b2d" stroke-width="1.200"/><path d="M1003.0 575.0Q1005.4 540.6 995.0 500.0Q993.4 541.9 1003.0 575.0Z" fill="#747476" stroke="#2b2b2d" stroke-width="1.200"/><path d="M1002.0 584.0C989.1 567.6 956.8 546.8 946.9 547.3C950.3 556.6 981.9 578.4 1002.0 584.0Z" fill="#7d7d7f" stroke="#2b2b2d" stroke-width="1.200"/><path d="M1000.0 573.0C983.7 554.4 944.7 530.4 933.3 530.6C937.9 541.0 976.2 566.2 1000.0 573.0Z" fill="#7d7d7f" stroke="#2b2b2d" stroke-width="1.200"/><path d="M997.0 561.0C977.7 539.5 932.5 509.7 919.7 508.6C925.4 520.1 969.9 551.1 997.0 561.0Z" fill="#7d7d7f" stroke="#2b2b2d" stroke-width="1.200"/><path d="M993.0 548.0C973.5 525.8 927.5 494.4 914.5 493.0C920.3 504.8 965.4 537.2 993.0 548.0Z" fill="#7d7d7f" stroke="#2b2b2d" stroke-width="1.200"/><path d="M989.0 535.0C974.1 514.4 936.5 485.7 924.9 484.6C928.7 495.6 965.4 525.4 989.0 535.0Z" fill="#7d7d7f" stroke="#2b2b2d" stroke-width="1.200"/><path d="M985.0 522.0C974.1 499.2 942.4 464.7 931.2 461.6C933.0 473.0 963.6 508.5 985.0 522.0Z" fill="#7d7d7f" stroke="#2b2b2d" stroke-width="1.200"/><path d="M1004.0 590.0Q1020.0 573.7 1030.0 548.0Q1011.4 568.5 1004.0 590.0Z" fill="#88888a" stroke="#2b2b2d" stroke-width="1.200"/><path d="M1004.0 588.0Q1000.0 567.9 985.0 548.0Q990.9 572.1 1004.0 588.0Z" fill="#88888a" stroke="#2b2b2d" stroke-width="1.200"/><path d="M1005.0 592.0Q1022.5 587.9 1040.0 575.0Q1019.0 580.8 1005.0 592.0Z" fill="#88888a" stroke="#2b2b2d" stroke-width="1.200"/><path d="M993 618.500C975 625 960 638 959 655C958 680 980 699.500 1008 699.500C1036 699.500 1058 680 1057 655C1056 638 1041 625 1023 618.500Z" fill="#a2a2a4" stroke="#2b2b2d" stroke-width="1.500"/><rect x="990" y="612.600" width="34.400" height="6" rx="3" fill="#a2a2a4" stroke="#2b2b2d" stroke-width="1.400"/><path d="M961 643.500H1055M961.500 674H1054.500" stroke="#2b2b2d" stroke-width="1.300"/><path d="M965 671.500L969.8 647.500L974.6 671.500L979.3 647.500L984.1 671.500L988.9 647.500L993.7 671.500L998.4 647.500L1003.2 671.500L1008.0 647.500L1012.8 671.500L1017.6 647.500L1022.3 671.500L1027.1 647.500L1031.9 671.500L1036.7 647.500L1041.4 671.500L1046.2 647.500L1051.0 671.500" fill="none" stroke="#2b2b2d" stroke-width="1.300"/><rect x="835.500" y="698.600" width="935.500" height="4.300" rx="2.100" fill="#c6c6c8" stroke="#2b2b2d" stroke-width="1.400"/></svg>
<div class="h1" style="left:729.0px;top:281.9px;height:50px;line-height:50px;color:#5e6266">2025-10-31 <span class="c">周五</span></div>
<div class="b" style="left:612px;top:224px;width:40px;height:4px;background:#1a7ff0"></div>
<div class="b" style="left:612px;top:267px;width:40px;height:4px;background:#1a7ff0"></div>
<div class="b" style="left:612px;top:310px;width:40px;height:4px;background:#1a7ff0"></div>
<div class="b" style="left:1924px;top:231px;width:12px;height:608px;background:#343434;border-radius:6px"></div>
<div class="b" style="left:594px;top:152px;width:1346px;height:74px;background:#222222;border:1.5px solid #363636;border-radius:14px"></div>
<svg class="ic" style="left:616.5px;top:172.0px;width:36px;height:36px;color:#d2d2d2" viewBox="0 0 24 24" fill="none" stroke="currentColor" stroke-width="1.75" stroke-linecap="round" stroke-linejoin="round"><path d="M9 14 4 9l5-5"/><path d="M4 9h10.5a5.5 5.5 0 0 1 5.5 5.5a5.5 5.5 0 0 1-5.5 5.5H11"/></svg>
<svg class="ic" style="left:675.6px;top:172.0px;width:36px;height:36px;color:#d2d2d2" viewBox="0 0 24 24" fill="none" stroke="currentColor" stroke-width="1.75" stroke-linecap="round" stroke-linejoin="round"><path d="m15 14 5-5-5-5"/><path d="M20 9H9.5A5.5 5.5 0 0 0 4 14.5A5.5 5.5 0 0 0 9.5 20H13"/></svg>
<svg class="ic" style="left:736.8px;top:174.5px;width:30px;height:30px;color:#d2d2d2" viewBox="0 0 24 24" fill="none" stroke="currentColor" stroke-width="2.1" stroke-linecap="round" stroke-linejoin="round"><path d="m7 21-4.3-4.3c-1-1-1-2.5 0-3.4l9.6-9.6c1-1 2.5-1 3.4 0l5.6 5.6c1 1 1 2.5 0 3.4L13 21"/><path d="M22 21H7"/><path d="m5 11 9 9"/></svg>
<svg class="ic" style="left:791.0px;top:170px;width:44px;height:40px" viewBox="0 0 44 40"><text x="4.600" y="31" font-family="Liberation Sans, sans-serif" font-size="32.300" fill="#d2d2d2" stroke="#d2d2d2" stroke-width=".7" textLength="19" lengthAdjust="spacingAndGlyphs">H</text><text x="23.3" y="31" font-family="Liberation Sans, sans-serif" font-size="23.700" fill="#d2d2d2" stroke="#d2d2d2" stroke-width=".7">1</text></svg>
<svg class="ic" style="left:851.4px;top:170px;width:44px;height:40px" viewBox="0 0 44 40"><text x="4.600" y="31" font-family="Liberation Sans, sans-serif" font-size="32.300" fill="#d2d2d2" stroke="#d2d2d2" stroke-width=".7" textLength="19" lengthAdjust="spacingAndGlyphs">H</text><text x="21.8" y="31" font-family="Liberation Sans, sans-serif" font-size="23.700" fill="#d2d2d2" stroke="#d2d2d2" stroke-width=".7">2</text></svg>
<svg class="ic" style="left:911.4px;top:170px;width:44px;height:40px" viewBox="0 0 44 40"><text x="4.600" y="31" font-family="Liberation Sans, sans-serif" font-size="32.300" fill="#d2d2d2" stroke="#d2d2d2" stroke-width=".7" textLength="19" lengthAdjust="spacingAndGlyphs">H</text><text x="22" y="31" font-family="Liberation Sans, sans-serif" font-size="23.700" fill="#d2d2d2" stroke="#d2d2d2" stroke-width=".7">3</text></svg>
<svg class="ic" style="left:960px;top:166px;width:50px;height:44px" viewBox="0 0 50 44"><text x="3.600" y="36.500" font-family="Liberation Sans, sans-serif" font-size="36.500" fill="#d2d2d2" stroke="#d2d2d2" stroke-width=".5" textLength="24.800" lengthAdjust="spacingAndGlyphs">H</text><text x="26.900" y="36.500" font-family="Liberation Sans, sans-serif" font-size="22.400" font-weight="bold" fill="#d2d2d2">n</text></svg>
<svg class="ic" style="left:1001.5px;top:194.7px;width:9px;height:6px" viewBox="0 0 9 6"><path d="M0 0h9L4.500 5.500z" fill="#6e6e6e"/></svg>
<svg class="ic" style="left:1021.6px;top:170.5px;width:60px;height:40px" viewBox="0 0 60 40"><text x="30.0" y="31" text-anchor="middle" font-family="Liberation Sans, sans-serif" font-size="34.5" font-weight="normal" fill="#d2d2d2" style="">B</text></svg>
<svg class="ic" style="left:1080.0px;top:170.5px;width:60px;height:40px" viewBox="0 0 60 40"><text x="30.0" y="31" text-anchor="middle" font-family="Liberation Sans, sans-serif" font-size="36" font-weight="normal" fill="#d2d2d2" style="font-style:italic;font-family:Liberation Serif,serif">I</text></svg>
<svg class="ic" style="left:1140.6px;top:170.5px;width:60px;height:40px" viewBox="0 0 60 40"><text x="30.0" y="31" text-anchor="middle" font-family="Liberation Sans, sans-serif" font-size="34" font-weight="normal" fill="#d2d2d2" style="">S</text></svg>
<div class="b" style="left:1155px;top:188.7px;width:31.5px;height:2.6px;background:#d2d2d2;border-radius:2px"></div>
<svg class="ic" style="left:1199.5px;top:166.5px;width:60px;height:40px" viewBox="0 0 60 40"><text x="30.0" y="31" text-anchor="middle" font-family="Liberation Sans, sans-serif" font-size="28.5" font-weight="normal" fill="#d2d2d2" style="">U</text></svg>
<div class="b" style="left:1216px;top:199.4px;width:27px;height:2.6px;background:#d2d2d2;border-radius:2px"></div>
<svg class="ic" style="left:1270.8px;top:172.0px;width:36px;height:36px;color:#d2d2d2" viewBox="0 0 24 24" fill="none" stroke="currentColor" stroke-width="1.75" stroke-linecap="round" stroke-linejoin="round"><path d="M14.1 3.900 8.300 9.700 2.500 16.500v3.200h9.300L21.700 11.300M8.300 9.700 15 16.800"/></svg>
<svg class="ic" style="left:1330.3px;top:171.5px;width:36px;height:36px;color:#d2d2d2" viewBox="0 0 24 24" fill="none" stroke="currentColor" stroke-width="1.75" stroke-linecap="round" stroke-linejoin="round"><path d="M16 3a2 2 0 0 0-2 2v6a2 2 0 0 0 2 2 1 1 0 0 1 1 1v1a2 2 0 0 1-2 2 1 1 0 0 0-1 1v2a1 1 0 0 0 1 1 6 6 0 0 0 6-6V5a2 2 0 0 0-2-2z"/><path d="M5 3a2 2 0 0 0-2 2v6a2 2 0 0 0 2 2 1 1 0 0 1 1 1v1a2 2 0 0 1-2 2 1 1 0 0 0-1 1v2a1 1 0 0 0 1 1 6 6 0 0 0 6-6V5a2 2 0 0 0-2-2z"/></svg>
<svg class="ic" style="left:1390.5px;top:172.2px;width:34.5px;height:34.5px;color:#d2d2d2" viewBox="0 0 24 24" fill="none" stroke="currentColor" stroke-width="1.75" stroke-linecap="round" stroke-linejoin="round"><path d="m21.73 18-8-14a2 2 0 0 0-3.48 0l-8 14A2 2 0 0 0 4 21h16a2 2 0 0 0 1.73-3"/><path d="M12 9v4"/><path d="M12 17h.01"/></svg>
<svg class="ic" style="left:1436px;top:172px;width:40px;height:36px" viewBox="1436 172 40 36" fill="none" stroke="#d2d2d2" stroke-linecap="round" stroke-linejoin="round"><text x="1455" y="202" text-anchor="middle" font-family="Liberation Sans, sans-serif" font-size="30" font-weight="bold" fill="#d2d2d2" stroke="none">T</text><circle cx="1468.500" cy="180.300" r="2.400" stroke-width="1.600"/><path d="M1449.200 193.300l-4.400 3.900 4.400 3.800M1460.800 193.300l4.300 3.900-4.300 3.800" stroke-width="2.300"/></svg>
<svg class="ic" style="left:1478.0px;top:194.7px;width:9px;height:6px" viewBox="0 0 9 6"><path d="M0 0h9L4.500 5.500z" fill="#6e6e6e"/></svg>
<svg class="ic" style="left:1502.4px;top:171.5px;width:36px;height:36px;color:#d2d2d2" viewBox="0 0 24 24" fill="none" stroke="currentColor" stroke-width="1.75" stroke-linecap="round" stroke-linejoin="round"><line x1="8" x2="21" y1="6" y2="6"/><line x1="8" x2="21" y1="12" y2="12"/><line x1="8" x2="21" y1="18" y2="18"/><line x1="3" x2="3.01" y1="6" y2="6"/><line x1="3" x2="3.01" y1="12" y2="12"/><line x1="3" x2="3.01" y1="18" y2="18"/></svg>
<svg class="ic" style="left:1539.5px;top:194.7px;width:9px;height:6px" viewBox="0 0 9 6"><path d="M0 0h9L4.500 5.500z" fill="#6e6e6e"/></svg>
<svg class="ic" style="left:1572.0px;top:171.5px;width:36px;height:36px;color:#d2d2d2" viewBox="0 0 24 24" fill="none" stroke="currentColor" stroke-width="1.75" stroke-linecap="round" stroke-linejoin="round"><path d="m9 11 3 3L22 4"/><path d="M21 12v7a2 2 0 0 1-2 2H5a2 2 0 0 1-2-2V5a2 2 0 0 1 2-2h11"/></svg>
<svg class="ic" style="left:1621.0px;top:172.3px;width:36px;height:36px;color:#d2d2d2" viewBox="0 0 24 24" fill="none" stroke="currentColor" stroke-width="1.75" stroke-linecap="round" stroke-linejoin="round"><line x1="17" x2="7" y1="5" y2="5"/><line x1="21" x2="3" y1="10" y2="10"/><line x1="17" x2="7" y1="15" y2="15"/><line x1="21" x2="3" y1="20" y2="20"/></svg>
<svg class="ic" style="left:1659.2px;top:194.7px;width:9px;height:6px" viewBox="0 0 9 6"><path d="M0 0h9L4.500 5.500z" fill="#6e6e6e"/></svg>
<svg class="ic" style="left:1678.2px;top:166.2px;width:60px;height:40px" viewBox="0 0 60 40"><text x="30.0" y="31" text-anchor="middle" font-family="Liberation Sans, sans-serif" font-size="28.5" font-weight="bold" fill="#d2d2d2" style="">A</text></svg>
<div class="b" style="left:1691px;top:201px;width:35px;height:6px;background:#48a9c5"></div>
<svg class="ic" style="left:1732.5px;top:194.7px;width:9px;height:6px" viewBox="0 0 9 6"><path d="M0 0h9L4.500 5.500z" fill="#6e6e6e"/></svg>
<svg class="ic" style="left:1760px;top:170px;width:36px;height:40px" viewBox="1760 170 36 40" fill="none" stroke="#d2d2d2" stroke-linejoin="round" stroke-linecap="round"><path d="M1777.800 174.100 1790.800 187.700 1781 196.100 1769 183.500Z" stroke-width="2.600"/><path d="M1772.200 186.800 1767.300 191.400 1774.600 198.200 1779 194.100" stroke-width="2.400"/><path d="M1768.300 192.900 1764.200 198.700H1771L1773.600 196.600Z" fill="#d2d2d2" stroke-width="1"/></svg>
<div class="b" style="left:1763.2px;top:201.8px;width:24.5px;height:3.4px;background:#f4e867;border-radius:2px"></div>
<svg class="ic" style="left:1794.3px;top:194.7px;width:9px;height:6px" viewBox="0 0 9 6"><path d="M0 0h9L4.500 5.500z" fill="#6e6e6e"/></svg>
<svg class="ic" style="left:1818.6px;top:171.3px;width:36px;height:36px;color:#d2d2d2" viewBox="0 0 24 24" fill="none" stroke="currentColor" stroke-width="1.75" stroke-linecap="round" stroke-linejoin="round"><path d="M12 3v18"/><rect width="18" height="18" x="3" y="3" rx="2"/><path d="M3 9h18"/><path d="M3 15h18"/></svg>
<svg class="ic" style="left:1855.5px;top:194.7px;width:9px;height:6px" viewBox="0 0 9 6"><path d="M0 0h9L4.500 5.500z" fill="#6e6e6e"/></svg>
<svg class="ic" style="left:1879.4px;top:171.3px;width:36px;height:36px;color:#d2d2d2" viewBox="0 0 24 24" fill="none" stroke="currentColor" stroke-width="1.75" stroke-linecap="round" stroke-linejoin="round"><polyline points="4 17 10 11 4 5"/><line x1="12" x2="20" y1="19" y2="19"/></svg>
<svg class="ic" style="left:1916.8px;top:194.7px;width:9px;height:6px" viewBox="0 0 9 6"><path d="M0 0h9L4.500 5.500z" fill="#6e6e6e"/></svg>
<svg class="ic" style="left:693.0px;top:768.5px;width:32px;height:32px;color:#555555" viewBox="0 0 24 24" fill="none" stroke="currentColor" stroke-width="2.4" stroke-linecap="round" stroke-linejoin="round"><path d="m6 9 6 6 6-6"/></svg>
<div class="b" style="left:728.5px;top:840.5px;width:1.5px;height:43px;background:#d0d0d0"></div>
<div class="mono" style="left:729.3px;top:842.3px;height:44px;line-height:44px;"><span style="color:#86c440">---</span></div>
<div class="mono" style="left:729.3px;top:888.2px;height:44px;line-height:44px;"><span style="color:#f39c3f">banner</span><span style="color:#cfcfcf">:</span> <span style="color:#e6d86e">"![[Journal-2.jpg]]"</span></div>
<div class="mono" style="left:729.3px;top:931.9px;height:44px;line-height:44px;"><span style="color:#f39c3f">banner_x</span><span style="color:#cfcfcf">:</span> <span style="color:#a97bd9">0.48709</span></div>
<div class="mono" style="left:729.3px;top:973.7px;height:44px;line-height:44px;"><span style="color:#86c440">---</span></div>
<div class="ed" style="left:730.5px;top:1056.9px;height:48px;line-height:48px;"><span style="letter-spacing:2.8px">&lt;&lt;</span> <a>2025-10-30 <span class="c">周四</span></a> | <a>2025-11-01 <span class="c">周六</span></a> <span style="letter-spacing:2.8px">&gt;&gt;</span></div>
<div class="h1" style="left:729.0px;top:1212.4px;height:50px;line-height:50px;">2025-10-31 <span class="c">周五</span></div>
<div class="ed" style="left:729px;width:1113px;top:1329.2px;height:48px;line-height:48px;text-align:center;font-weight:bold;font-size:29.5px">未来一个月有0个生日:</div>
<div class="b" style="left:1956px;top:14px;width:66px;height:49px;background:#2e2e2e;border-radius:8px"></div>
<svg class="ic" style="left:1970.3px;top:20.2px;width:36px;height:36px;color:#d4d4d4" viewBox="0 0 24 24" fill="none" stroke="currentColor" stroke-width="1.75" stroke-linecap="round" stroke-linejoin="round"><path d="m19 21-7-4-7 4V5a2 2 0 0 1 2-2h10a2 2 0 0 1 2 2v16z"/></svg>
<svg class="ic" style="left:2042.8px;top:20.2px;width:36px;height:36px;color:#8e8e8e" viewBox="0 0 24 24" fill="none" stroke="currentColor" stroke-width="1.75" stroke-linecap="round" stroke-linejoin="round"><path d="M15 2H6a2 2 0 0 0-2 2v16a2 2 0 0 0 2 2h12a2 2 0 0 0 2-2V7Z"/><path d="M14 2v4a2 2 0 0 0 2 2h4"/></svg>
<svg class="ic" style="left:2114.3px;top:20.2px;width:36px;height:36px;color:#8e8e8e" viewBox="0 0 24 24" fill="none" stroke="currentColor" stroke-width="1.75" stroke-linecap="round" stroke-linejoin="round"><rect width="20" height="5" x="2" y="3" rx="1"/><path d="M4 8v11a2 2 0 0 0 2 2h12a2 2 0 0 0 2-2V8"/><path d="M10 12h4"/></svg>
<svg class="ic" style="left:2336px;top:28px;width:22px;height:22px" viewBox="0 0 22 22" stroke="#d6d6d6" stroke-width="2" fill="none"><path d="M1 11h20"/></svg>
<svg class="ic" style="left:2420px;top:26px;width:26px;height:24px" viewBox="2420 26 26 24" stroke="#d6d6d6" stroke-width="2" fill="none" stroke-linejoin="miter"><rect x="2424" y="33.300" width="13.700" height="13.400"/><path d="M2428.100 33.300V28.900H2441.900V42.200H2437.700"/></svg>
<svg class="ic" style="left:2506px;top:27px;width:22px;height:22px" viewBox="0 0 22 22" stroke="#d6d6d6" stroke-width="2" fill="none"><path d="M2.300 1.600l18.200 18.200M20.500 1.600L2.300 19.800"/></svg>
<svg class="ic" style="left:1966.4px;top:100.7px;width:36px;height:36px;color:#8e8e8e" viewBox="0 0 24 24" fill="none" stroke="currentColor" stroke-width="1.75" stroke-linecap="round" stroke-linejoin="round"><path d="m19 21-7-4-7 4V5a2 2 0 0 1 2-2h10a2 2 0 0 1 2 2v16z"/><line x1="12" x2="12" y1="7" y2="13"/><line x1="15" x2="9" y1="10" y2="10"/></svg>
<svg class="ic" style="left:2029.5px;top:100.7px;width:36px;height:36px;color:#8e8e8e" viewBox="0 0 24 24" fill="none" stroke="currentColor" stroke-width="1.75" stroke-linecap="round" stroke-linejoin="round"><path d="M12 10v6"/><path d="M9 13h6"/><path d="M20 20a2 2 0 0 0 2-2V8a2 2 0 0 0-2-2h-7.9a2 2 0 0 1-1.69-.9L9.6 3.9A2 2 0 0 0 7.93 3H4a2 2 0 0 0-2 2v13a2 2 0 0 0 2 2Z"/></svg>
<svg class="ic" style="left:2091.6px;top:100.7px;width:36px;height:36px;color:#8e8e8e" viewBox="0 0 24 24" fill="none" stroke="currentColor" stroke-width="1.75" stroke-linecap="round" stroke-linejoin="round"><path d="m7 20 5-5 5 5"/><path d="m7 4 5 5 5-5"/></svg>
<svg class="ic" style="left:1973.2px;top:178.1px;width:26.5px;height:26.5px;color:#8a8a8a" viewBox="0 0 24 24" fill="none" stroke="currentColor" stroke-width="2.2" stroke-linecap="round" stroke-linejoin="round"><path d="M15 2H6a2 2 0 0 0-2 2v16a2 2 0 0 0 2 2h12a2 2 0 0 0 2-2V7Z"/><path d="M14 2v4a2 2 0 0 0 2 2h4"/></svg>
<svg class="ic" style="left:2013.0px;top:178.2px;width:29px;height:29px" viewBox="0 0 32 32"><g transform="translate(.6,-1.800) rotate(45 16 16) translate(16,16) scale(1.030) translate(-16,-16)"><path d="M12.8 8.500 1.500 13.800c-.6.300-.9.800-.9 1.400v1.200c0 .6.500 1 1.100.9l11.100-1.800zM19.200 8.500l11.300 5.300c.6.300.9.800.9 1.400v1.200c0 .6-.5 1-1.100.9l-11.100-1.800z" fill="#0084CE"/><path d="M12.800 23.500 8.300 26.800c-.3.200-.5.600-.5 1v.9c0 .5.400.8.900.7l4.100-1zM19.200 23.500l4.500 3.300c.3.200.5.600.5 1v.9c0 .5-.4.800-.9.700l-4.100-1z" fill="#CDC4D6"/><path d="M16 .6c2.300 0 3.700 2.400 3.700 4.800v19.800c0 1.700-1 3.400-2.100 4.400-.9.900-2.300.9-3.200 0-1.100-1-2.100-2.700-2.100-4.400V5.400C12.300 3 13.700.6 16 .6z" fill="#CDC4D6"/><path d="M14.300 4.600c.3-1 .9-1.600 1.700-1.600s1.400.6 1.700 1.600c-1.100-.3-2.300-.3-3.400 0z" fill="#26C9FC"/><rect x="15.400" y="25.500" width="1.200" height="5.200" rx=".6" fill="#0084CE"/></g></svg>
<div class="t" style="left:2053.0px;top:172.2px;height:40px;line-height:40px;"><span class="c">从这里开始</span></div>
<svg class="ic" style="left:1973.2px;top:230.6px;width:26.5px;height:26.5px;color:#8a8a8a" viewBox="0 0 24 24" fill="none" stroke="currentColor" stroke-width="2.2" stroke-linecap="round" stroke-linejoin="round"><path d="M15 2H6a2 2 0 0 0-2 2v16a2 2 0 0 0 2 2h12a2 2 0 0 0 2-2V7Z"/><path d="M14 2v4a2 2 0 0 0 2 2h4"/></svg>
<svg class="ic" style="left:2013.0px;top:230.6px;width:29px;height:29px" viewBox="0 0 32 32"><rect x="2" y="2" width="28" height="28" rx="4" fill="#00D26A"/><path d="M7.300 17l5.200 5.200L24.700 10" fill="none" stroke="#fff" stroke-width="3.600" stroke-linecap="round" stroke-linejoin="round"/></svg>
<div class="t" style="left:2053.0px;top:224.6px;height:40px;line-height:40px;">Task Manager <span class="c">任务管理</span></div>
<svg class="ic" style="left:1973.2px;top:283.0px;width:26.5px;height:26.5px;color:#8a8a8a" viewBox="0 0 24 24" fill="none" stroke="currentColor" stroke-width="2.2" stroke-linecap="round" stroke-linejoin="round"><path d="M15 2H6a2 2 0 0 0-2 2v16a2 2 0 0 0 2 2h12a2 2 0 0 0 2-2V7Z"/><path d="M14 2v4a2 2 0 0 0 2 2h4"/></svg>
<svg class="ic" style="left:2013.0px;top:283.0px;width:29px;height:29px" viewBox="0 0 32 32"><path d="M9.500 3.500c1.800-1.500 5.500-1.700 7 .2 1 1.300.7 3-.6 3.600l-2.600.9c-.5 2.300-.4 4.800.4 7.300 2.200-2.600 6.300-3.800 10-2.400 4.600 1.700 6.800 6.300 5.600 10.500-.9 3.200-3.800 5.200-7.500 5.400H7.500c-3.200 0-5.500-2.300-5.500-5.400 0-4.400 2.500-12.700 5-17.600.6-1.100 1.500-1.900 2.500-2.500z" fill="#FFC83D"/><path d="M12 19.500l4 5.500M15.500 19l-4.500 6.500M12.200 6.200l2.300.9" fill="none" stroke="#D67D00" stroke-width="1" stroke-linecap="round"/></svg>
<div class="t" style="left:2053.0px;top:277.0px;height:40px;line-height:40px;">Habit Tracker <span class="c">习惯追踪</span></div>
<svg class="ic" style="left:1973.2px;top:335.4px;width:26.5px;height:26.5px;color:#8a8a8a" viewBox="0 0 24 24" fill="none" stroke="currentColor" stroke-width="2.2" stroke-linecap="round" stroke-linejoin="round"><path d="M15 2H6a2 2 0 0 0-2 2v16a2 2 0 0 0 2 2h12a2 2 0 0 0 2-2V7Z"/><path d="M14 2v4a2 2 0 0 0 2 2h4"/></svg>
<svg class="ic" style="left:2013.0px;top:335.5px;width:29px;height:29px" viewBox="0 0 32 32"><path d="M2.300 29.600v-4c0-2.200 2.200-3.400 5.200-3.600h4.600c3 .2 5.200 1.400 5.200 3.600v4z" fill="#321B41"/><path d="M14.700 29.600v-4c0-2.200 2.200-3.400 5.200-3.600h4.600c3 .2 5.200 1.400 5.200 3.600v4z" fill="#321B41"/><path d="M9.600 7.800c3.200 0 5.400 2.300 5.400 5.600 0 .4.900.5.900 1.500s-.8 1.300-1.100 1.500c-.5 1.800-1.500 3.200-2.600 4.100v2c0 1.500-1.200 2.600-2.600 2.600s-2.600-1.100-2.600-2.600v-2c-1.100-.9-2.100-2.300-2.600-4.100-.3-.2-1.100-.5-1.100-1.500s.9-1.100.9-1.500c0-3.300 2.200-5.600 5.400-5.600z" fill="#533566"/><path d="M22.700 7.800c3.200 0 5.400 2.300 5.400 5.600 0 .4.900.5.900 1.500s-.8 1.300-1.100 1.500c-.5 1.800-1.500 3.200-2.600 4.100v2c0 1.500-1.200 2.600-2.600 2.600s-2.600-1.100-2.600-2.600v-2c-1.100-.9-2.100-2.300-2.600-4.100-.3-.2-1.100-.5-1.100-1.500s.9-1.100.9-1.500c0-3.300 2.200-5.600 5.400-5.600z" fill="#533566"/></svg>
<div class="t" style="left:2053.0px;top:329.5px;height:40px;line-height:40px;">Birthday Calendar <span class="c">生日日历</span></div>
<svg class="ic" style="left:1973.2px;top:387.8px;width:26.5px;height:26.5px;color:#8a8a8a" viewBox="0 0 24 24" fill="none" stroke="currentColor" stroke-width="2.2" stroke-linecap="round" stroke-linejoin="round"><path d="M15 2H6a2 2 0 0 0-2 2v16a2 2 0 0 0 2 2h12a2 2 0 0 0 2-2V7Z"/><path d="M14 2v4a2 2 0 0 0 2 2h4"/></svg>
<svg class="ic" style="left:2013.0px;top:387.9px;width:29px;height:29px" viewBox="0 0 32 32"><path d="M5.400 3.500c0-1.100.9-2 2-2h18.600c.8 0 1.500.7 1.500 1.500v25.200c0 .8-.7 1.500-1.500 1.500H7.400c-1.100 0-2-.9-2-2z" fill="#CA0B4A"/><path d="M5.400 3.500c0-1.100.9-2 2-2h1.400v24.700H7.400c-.8 0-1.500.3-2 .8z" fill="#990838"/><path d="M6.700 26.400h20.800v2.300H6.700z" fill="#F3EEF8"/><path d="M5.400 27.300c0-1.100.9-1.900 2-1.900h20.100v1H7.600c-.6 0-1 .5-1 1.100s.4 1.200 1 1.200h19.900v1H7.400c-1.100 0-2-.9-2-2z" fill="#990838"/></svg>
<div class="t" style="left:2053.0px;top:381.9px;height:40px;line-height:40px;">Book Summary <span class="c">读书笔记</span></div>
<svg class="ic" style="left:1973.2px;top:440.2px;width:26.5px;height:26.5px;color:#8a8a8a" viewBox="0 0 24 24" fill="none" stroke="currentColor" stroke-width="2.2" stroke-linecap="round" stroke-linejoin="round"><path d="M15 2H6a2 2 0 0 0-2 2v16a2 2 0 0 0 2 2h12a2 2 0 0 0 2-2V7Z"/><path d="M14 2v4a2 2 0 0 0 2 2h4"/></svg>
<svg class="ic" style="left:2013.0px;top:440.3px;width:29px;height:29px" viewBox="0 0 32 32"><path d="M5 30.200v-3.700c0-5 3.800-8.300 8.200-9.300h5.600c4.400 1 8.900 4.300 8.900 9.300v3.700z" fill="#F3EEF8"/><path d="M13 17.200l3.200 13h.6l2.800-13z" fill="#00A6ED"/><path d="M13.200 13.500h6.200v4l-3.100 3-3.100-3z" fill="#FFC83D"/><path d="M16.300 2.600c4 0 6.500 2.800 6.500 6.600 0 4.200-2.600 8.200-6.500 8.200s-6.500-4-6.500-8.200c0-3.800 2.500-6.600 6.500-6.600z" fill="#FFC83D"/><path d="M9.700 9.800c-.9-4.600 2-7.600 6.600-7.600s7.500 3 6.600 7.600c-.4-1.700-1.300-3-2.600-3.600-2.300 1-5.700 1-8 0-1.300.6-2.200 1.900-2.600 3.600z" fill="#FFB02E"/><circle cx="13.800" cy="10.500" r=".8" fill="#7D4533"/><circle cx="18.800" cy="10.500" r=".8" fill="#7D4533"/><rect x="15" y="13.800" width="2.600" height="1" rx=".5" fill="#CA0B4A"/><path d="M12 18.500c-1.600 2.400-1.500 5.500.8 7.200M20.500 18.500c1.300 2 1.400 4 1 5.500" fill="none" stroke="#8D65C5" stroke-width="1.200"/><circle cx="21.300" cy="25" r="1.500" fill="#00A6ED"/><rect x="11.200" y="24.800" width="2.600" height="3.300" rx=".8" fill="#83CBFF"/></svg>
<div class="t" style="left:2053.0px;top:434.3px;height:40px;line-height:40px;">Health Summary <span class="c">健康笔记</span></div>
<div class="b" style="left:1956px;top:720px;width:66px;height:51px;background:#2e2e2e;border-radius:8px"></div>
<svg class="ic" style="left:1970.6px;top:727.2px;width:36px;height:36px;color:#d4d4d4" viewBox="0 0 24 24" fill="none" stroke="currentColor" stroke-width="1.75" stroke-linecap="round" stroke-linejoin="round"><line x1="8" x2="21" y1="6" y2="6"/><line x1="8" x2="21" y1="12" y2="12"/><line x1="8" x2="21" y1="18" y2="18"/><line x1="3" x2="3.01" y1="6" y2="6"/><line x1="3" x2="3.01" y1="12" y2="12"/><line x1="3" x2="3.01" y1="18" y2="18"/></svg>
<svg class="ic" style="left:2041.5px;top:727.2px;width:36px;height:36px;color:#8e8e8e" viewBox="0 0 24 24" fill="none" stroke="currentColor" stroke-width="1.75" stroke-linecap="round" stroke-linejoin="round"><g transform="translate(.3,0) scale(.86)" stroke-width="2.050"><path d="M10 13a5 5 0 0 0 7.540.54l3-3a5 5 0 0 0-7.070-7.070l-1.720 1.710"/><path d="M14 11a5 5 0 0 0-7.540-.54l-3 3a5 5 0 0 0 7.070 7.070l1.710-1.710"/></g><path d="M22.500 18.200h-8"/><path d="m17.500 15.200-3 3 3 3"/></svg>
<svg class="ic" style="left:2113.2px;top:727.2px;width:36px;height:36px;color:#8e8e8e" viewBox="0 0 24 24" fill="none" stroke="currentColor" stroke-width="1.75" stroke-linecap="round" stroke-linejoin="round"><g transform="translate(.3,0) scale(.86)" stroke-width="2.050"><path d="M10 13a5 5 0 0 0 7.540.54l3-3a5 5 0 0 0-7.070-7.070l-1.720 1.710"/><path d="M14 11a5 5 0 0 0-7.540-.54l-3 3a5 5 0 0 0 7.070 7.070l1.710-1.710"/></g><path d="M14.500 18.200h8"/><path d="m19.500 15.200 3 3-3 3"/></svg>
<svg class="ic" style="left:1966.5px;top:806.4px;width:36px;height:36px;color:#8e8e8e" viewBox="0 0 24 24" fill="none" stroke="currentColor" stroke-width="1.75" stroke-linecap="round" stroke-linejoin="round"><circle cx="11" cy="11" r="8"/><path d="m21 21-4.3-4.3"/></svg>
<svg class="ic" style="left:2029.3px;top:806.4px;width:36px;height:36px;color:#8e8e8e" viewBox="0 0 24 24" fill="none" stroke="currentColor" stroke-width="1.75" stroke-linecap="round" stroke-linejoin="round"><path d="M3 2h18"/><rect width="18" height="12" x="3" y="6" rx="2"/><path d="M3 22h18"/></svg>
<svg class="ic" style="left:2091.6px;top:806.4px;width:36px;height:36px;color:#8e8e8e" viewBox="0 0 24 24" fill="none" stroke="currentColor" stroke-width="1.75" stroke-linecap="round" stroke-linejoin="round"><path d="m7 20 5-5 5 5"/><path d="m7 4 5 5 5-5"/></svg>
<svg class="ic" style="left:1971.6px;top:882.5px;width:30px;height:30px;color:#8a8a8a" viewBox="0 0 24 24" fill="none" stroke="currentColor" stroke-width="2.2" stroke-linecap="round" stroke-linejoin="round"><path d="m6 9 6 6 6-6"/></svg>
<div class="t" style="left:2011.2px;top:877.5px;height:40px;line-height:40px;">2025-10-31 <span class="c">周五</span></div>
<div class="b" style="left:1987px;top:926px;width:1px;height:154px;background:#363636"></div>
<svg class="ic" style="left:2045.3px;top:937.2px;width:29px;height:29px" viewBox="0 0 32 32"><rect x="2" y="2" width="28" height="28" rx="4" fill="#00D26A"/><path d="M7.300 17l5.200 5.200L24.700 10" fill="none" stroke="#fff" stroke-width="3.600" stroke-linecap="round" stroke-linejoin="round"/></svg>
<div class="t" style="left:2093.3px;top:931.4px;height:40px;line-height:40px;"><span style="letter-spacing:-1.2px">Tasks</span> <span class="c">任务</span></div>
<svg class="ic" style="left:2045.3px;top:990.3px;width:29px;height:29px" viewBox="0 0 32 32"><path d="M5.400 3.500c0-1.100.9-2 2-2h18.600c.8 0 1.500.7 1.500 1.500v25.200c0 .8-.7 1.500-1.500 1.500H7.400c-1.100 0-2-.9-2-2z" fill="#CA0B4A"/><path d="M5.400 3.500c0-1.100.9-2 2-2h1.400v24.700H7.400c-.8 0-1.500.3-2 .8z" fill="#990838"/><path d="M6.700 26.400h20.800v2.300H6.700z" fill="#F3EEF8"/><path d="M5.400 27.300c0-1.100.9-1.900 2-1.900h20.100v1H7.600c-.6 0-1 .5-1 1.100s.4 1.200 1 1.200h19.900v1H7.400c-1.100 0-2-.9-2-2z" fill="#990838"/></svg>
<div class="t" style="left:2085.9px;top:984.4px;height:40px;line-height:40px;">Dairy <span class="c">日记</span></div>
<svg class="ic" style="left:2045.3px;top:1043.1px;width:29px;height:29px" viewBox="0 0 32 32"><path d="M9.500 3.500c1.800-1.500 5.500-1.700 7 .2 1 1.300.7 3-.6 3.600l-2.600.9c-.5 2.300-.4 4.800.4 7.300 2.200-2.600 6.300-3.800 10-2.400 4.600 1.700 6.800 6.300 5.600 10.500-.9 3.200-3.800 5.200-7.500 5.400H7.500c-3.200 0-5.500-2.300-5.500-5.400 0-4.400 2.500-12.700 5-17.600.6-1.100 1.500-1.900 2.500-2.500z" fill="#FFC83D"/><path d="M12 19.500l4 5.500M15.500 19l-4.500 6.500M12.200 6.200l2.300.9" fill="none" stroke="#D67D00" stroke-width="1" stroke-linecap="round"/></svg>
<div class="t" style="left:2085.9px;top:1037.2px;height:40px;line-height:40px;">Habits <span class="c">习惯</span></div>
<div class="st" style="left:1849.7px;top:1482.6px;height:40px;line-height:40px;">0 <span class="c">条反向链接</span></div>
<div class="st" style="left:1999.9px;top:1482.6px;height:40px;line-height:40px;">2 <span class="c">个笔记属性</span></div>
<svg class="ic" style="left:2147.7px;top:1486.0px;width:32px;height:32px;color:#5c5c5c" viewBox="0 0 24 24" fill="none" stroke="currentColor" stroke-width="2" stroke-linecap="round" stroke-linejoin="round"><path d="M12 20h9"/><path d="M16.5 3.5a2.12 2.12 0 0 1 3 3L7 19l-4 1 1-4Z"/></svg>
<div class="st" style="left:2203.7px;top:1482.6px;height:40px;line-height:40px;">315 <span class="c">个词</span></div>
<div class="st" style="left:2306.6px;top:1482.6px;height:40px;line-height:40px;">1,209 <span class="c">个字符</span></div>
<svg class="ic" style="left:2454.4px;top:1486.0px;width:32px;height:32px;color:#d6455d" viewBox="0 0 24 24" fill="none" stroke="currentColor" stroke-width="2" stroke-linecap="round" stroke-linejoin="round"><path d="M21 8L18.74 5.74A9.75 9.75 0 0 0 12 3C11 3 10.03 3.16 9.13 3.47"/><path d="M8 16H3v5"/><path d="M3 12C3 9.51 4 7.26 5.64 5.64"/><path d="m3 16 2.26 2.26A9.75 9.75 0 0 0 12 21c2.49 0 4.74-1 6.36-2.64"/><path d="M21 12c0 1-.16 1.97-.47 2.87"/><path d="M21 3v5h-5"/><path d="M22 22 2 2"/></svg>
<svg class="ic" style="left:2511.1px;top:1488.2px;width:25.5px;height:25.5px;color:#5c5c5c" viewBox="0 0 24 24" fill="none" stroke="currentColor" stroke-width="2.1" stroke-linecap="round" stroke-linejoin="round"><path d="M7 2h10"/><path d="M5 6h14"/><rect width="18" height="12" x="3" y="10" rx="2"/></svg>
</body></html>
